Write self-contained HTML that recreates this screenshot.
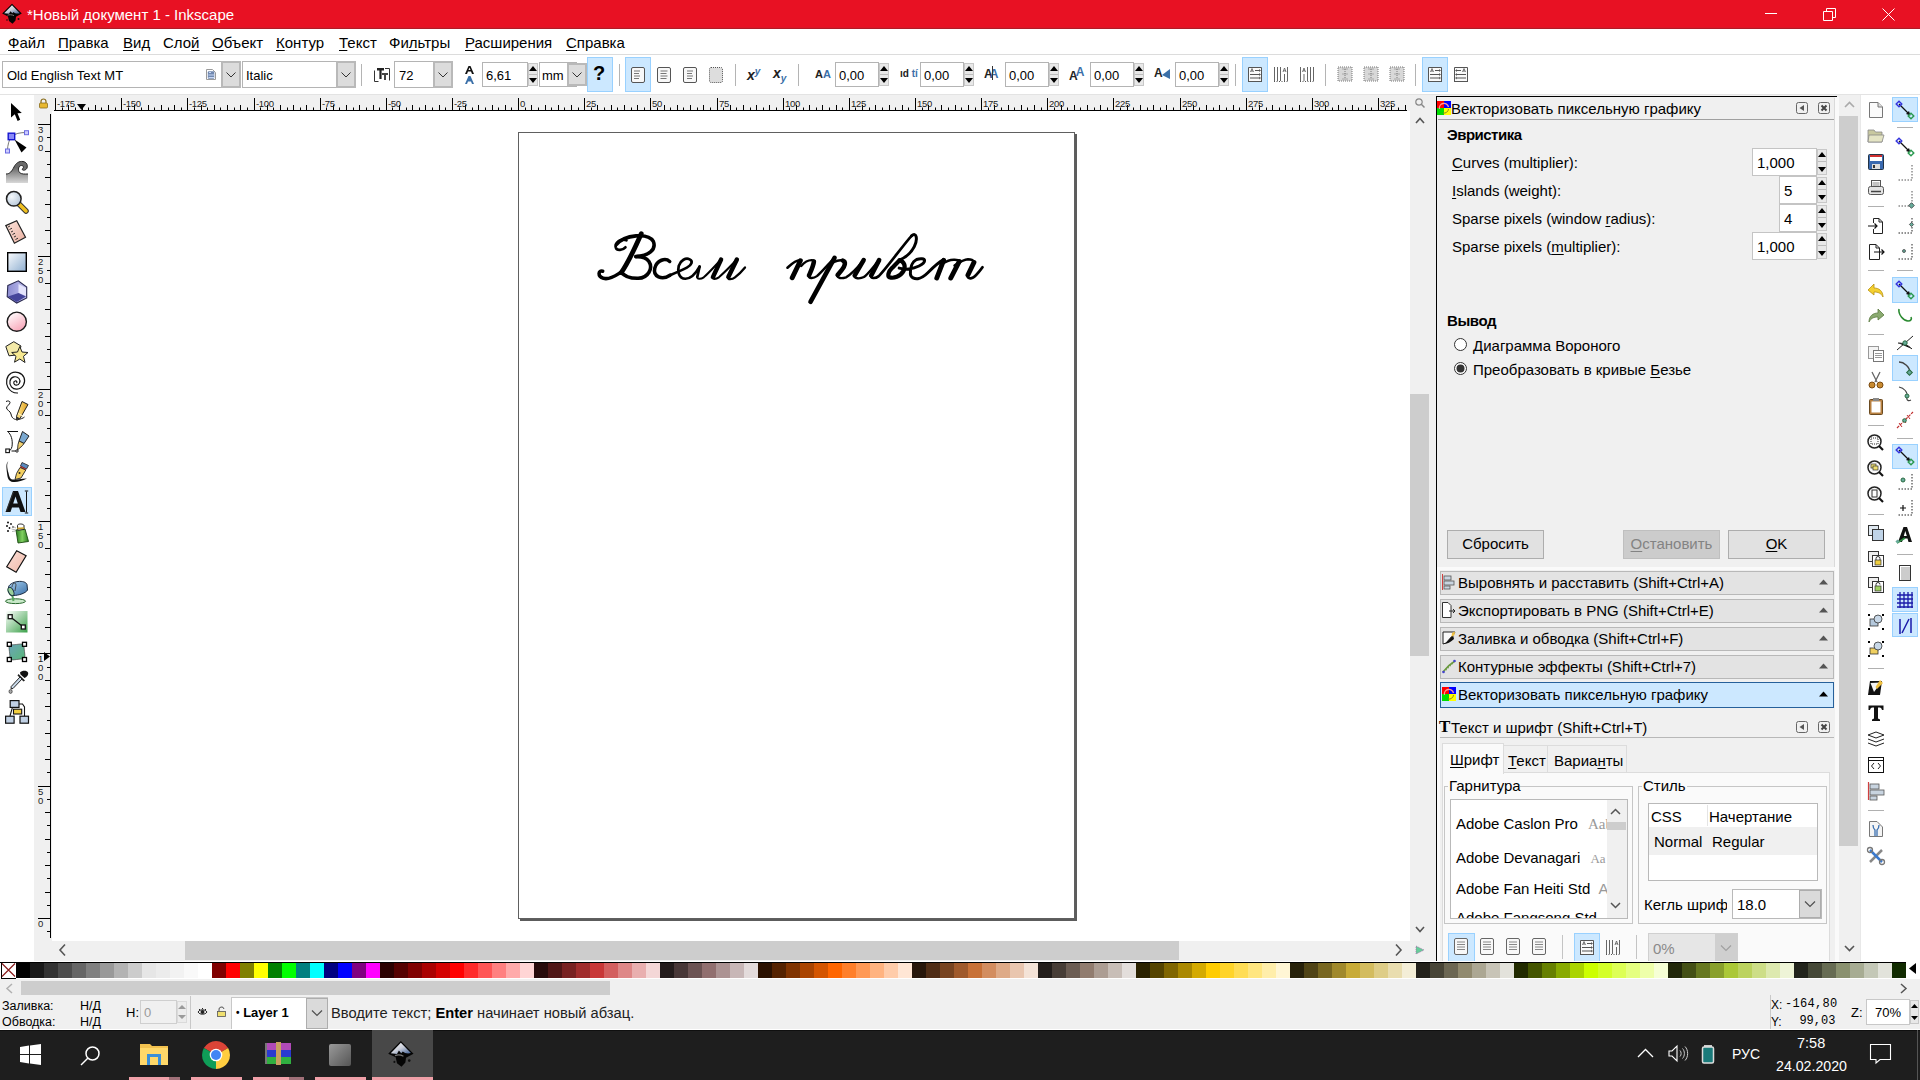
<!DOCTYPE html><html><head><meta charset='utf-8'><style>
*{margin:0;padding:0;box-sizing:border-box}
html,body{width:1920px;height:1080px;overflow:hidden;background:#fff;font-family:"Liberation Sans",sans-serif;color:#000}
.a{position:absolute}
.t{position:absolute;white-space:nowrap;line-height:1}
u{text-decoration:underline;text-underline-offset:2px;text-decoration-thickness:1px}
svg{position:absolute;overflow:visible}
</style></head><body><div class="a" style="left:0;top:0;width:1920px;height:27px;background:#e81123"></div><div class="a" style="left:0;top:27px;width:1920px;height:1px;background:#d81827"></div><div class="a" style="left:0;top:28px;width:1920px;height:1px;background:#b21a26"></div><div class="t" style="left:27px;top:7px;font-size:15px;color:#fff">*Новый документ 1 - Inkscape</div><svg style="left:0px;top:1px" width="24" height="24" viewBox="0 0 24 24"><defs><linearGradient id="lg1" x1="0" y1="0" x2="1" y2="1"><stop offset="0" stop-color="#ffffff"/><stop offset=".5" stop-color="#c8ccd8"/><stop offset="1" stop-color="#3a5a90"/></linearGradient></defs><path d="M12 2.8L21.8 12.6L16 15.8L15.5 19.5L12.5 22.8L9 20L8 15.5L2.2 12.6Z" fill="#050505"/><path d="M12 4.2L19.8 12.2C17.5 12.8 15 12.5 13.5 11L12.3 12.3L10.5 10.2L9 12.8L4.2 12.3Z" fill="url(#lg1)"/><path d="M7.5 14.2C9 13.5 12 13.6 14 14.6" stroke="#777" stroke-width="1" fill="none"/><circle cx="18.5" cy="18" r="1" fill="#111"/><circle cx="7" cy="19" r=".8" fill="#111"/></svg><div class="a" style="left:1765px;top:13px;width:12px;height:1px;background:#fff"></div><svg style="left:1823px;top:8px" width="13" height="13" viewBox="0 0 13 13"><path d="M0.5 3.5h9v9h-9z M3.5 3.5v-3h9v9h-3" fill="none" stroke="#fff" stroke-width="1"/></svg><svg style="left:1882px;top:8px" width="13" height="13" viewBox="0 0 13 13"><path d="M0.5 0.5L12.5 12.5M12.5 0.5L0.5 12.5" stroke="#fff" stroke-width="1"/></svg><div class="t" style="left:8px;top:35px;font-size:15px"><u>Ф</u>айл</div><div class="t" style="left:58px;top:35px;font-size:15px"><u>П</u>равка</div><div class="t" style="left:123px;top:35px;font-size:15px"><u>В</u>ид</div><div class="t" style="left:163px;top:35px;font-size:15px">Сло<u>й</u></div><div class="t" style="left:212px;top:35px;font-size:15px"><u>О</u>бъект</div><div class="t" style="left:276px;top:35px;font-size:15px"><u>К</u>онтур</div><div class="t" style="left:339px;top:35px;font-size:15px"><u>Т</u>екст</div><div class="t" style="left:389px;top:35px;font-size:15px">Фи<u>л</u>ьтры</div><div class="t" style="left:465px;top:35px;font-size:15px"><u>Р</u>асширения</div><div class="t" style="left:566px;top:35px;font-size:15px"><u>С</u>правка</div><div class="a" style="left:0;top:54px;width:1920px;height:1px;background:#dcdcdc"></div><div class="a" style="left:0;top:94px;width:1920px;height:1px;background:#e3e3e3"></div><div class="a" style="left:2px;top:61px;width:220px;height:27px;background:#fff;border:1px solid #b4b4b4"></div><div class="t" style="left:7px;top:69px;font-size:13px;color:#000">Old English Text MT</div><svg style="left:205px;top:68px" width="12" height="13" viewBox="0 0 12 13"><path d="M1.5 1.5H7.5L10.5 4.5V11.5H1.5Z" fill="#fff" stroke="#9a9a9a"/><rect x="2.8" y="3.2" width="6.5" height="7.5" rx="1" fill="#7088b0"/><path d="M4 4.5h2M3.5 7h5.5M3.5 9.5h5.5" stroke="#c8d8f4" stroke-width="1"/></svg><div class="a" style="left:221px;top:61px;width:20px;height:27px;background:#dcdcdc;border:2px solid #b9b9b9"></div><svg style="left:225.0px;top:70.5px" width="12" height="8" viewBox="0 0 12 8"><path d="M1.5 1.5L6 6L10.5 1.5" fill="none" stroke="#333" stroke-width="1"/></svg><div class="a" style="left:242px;top:61px;width:114px;height:27px;background:#fff;border:1px solid #b4b4b4"></div><div class="t" style="left:246px;top:69px;font-size:13px;color:#000">Italic</div><div class="a" style="left:336px;top:61px;width:20px;height:27px;background:#dcdcdc;border:2px solid #b9b9b9"></div><svg style="left:340.0px;top:70.5px" width="12" height="8" viewBox="0 0 12 8"><path d="M1.5 1.5L6 6L10.5 1.5" fill="none" stroke="#333" stroke-width="1"/></svg><div class="a" style="left:361px;top:64px;width:1px;height:22px;background:#b4b4b4"></div><svg style="left:374px;top:67px" width="16" height="15" viewBox="0 0 16 15"><path d="M0.5 14.5V3.5M0.5 14.5h4M15.5 1.5v12M11 1.5h4.5" stroke="#333" fill="none"/><path d="M3 1h7v2.5H7.6V12H5.4V3.5H3z" fill="#222"/><path d="M8 6h6v2h-2v5H10V8H8z" fill="#444"/></svg><div class="a" style="left:394px;top:61px;width:59px;height:27px;background:#fff;border:1px solid #b4b4b4"></div><div class="t" style="left:399px;top:69px;font-size:13px;color:#000">72</div><div class="a" style="left:433px;top:61px;width:20px;height:27px;background:#dcdcdc;border:2px solid #b9b9b9"></div><svg style="left:437.0px;top:70.5px" width="12" height="8" viewBox="0 0 12 8"><path d="M1.5 1.5L6 6L10.5 1.5" fill="none" stroke="#333" stroke-width="1"/></svg><svg style="left:464px;top:66px" width="12" height="18" viewBox="0 0 12 18"><path d="M1 8L4.5 0h2L10 8H8L7 5.5H4L3 8z M4.5 4h2L5.5 1.5z" fill="#111"/><path d="M1 18L4.5 10h2L10 18H8L7 15.5H4L3 18z" fill="#3a6fa8"/></svg><div class="a" style="left:482px;top:62px;width:46px;height:25px;background:#fff;border:1px solid #b4b4b4"></div><div class="t" style="left:486px;top:69px;font-size:13px;color:#000">6,61</div><div class="a" style="left:528px;top:63px;width:10px;height:23px;background:#e8e8e8;border:1px solid #c8c8c8"></div><div class="a" style="left:529px;top:74px;width:8px;height:1px;background:#bdbdbd"></div><svg style="left:529.0px;top:66px" width="8" height="17" viewBox="0 0 8 17"><path d="M0 5L4 0L8 5Z M0 12L4 17L8 12Z" fill="#000"/></svg><div class="a" style="left:539px;top:62px;width:38px;height:25px;background:#fff;border:1px solid #b4b4b4"></div><div class="t" style="left:542px;top:69px;font-size:13px;color:#000">mm</div><div class="a" style="left:567px;top:63px;width:20px;height:23px;background:#dcdcdc;border:2px solid #b9b9b9"></div><svg style="left:571.0px;top:70.5px" width="12" height="8" viewBox="0 0 12 8"><path d="M1.5 1.5L6 6L10.5 1.5" fill="none" stroke="#333" stroke-width="1"/></svg><div class="a" style="left:587px;top:57px;width:26px;height:35px;background:#cce8ff;border:1px solid #99d1ff"></div><div class="t" style="left:593px;top:63px;font-size:20px;font-weight:bold">?</div><div class="a" style="left:619px;top:64px;width:1px;height:22px;background:#b4b4b4"></div><div class="a" style="left:625px;top:57px;width:26px;height:35px;background:#cce8ff;border:1px solid #99d1ff"></div><svg style="left:631px;top:67px" width="14" height="16" viewBox="0 0 14 16"><rect x="0.5" y="0.5" width="13" height="15" rx="1.5" fill="#f8f8f8" stroke="#555"/><path d="M3 4.0h6" stroke="#777"/><path d="M3 6.5h5" stroke="#777"/><path d="M3 9.0h6" stroke="#777"/><path d="M3 11.5h5" stroke="#777"/></svg><svg style="left:657px;top:67px" width="14" height="16" viewBox="0 0 14 16"><rect x="0.5" y="0.5" width="13" height="15" rx="1.5" fill="#f8f8f8" stroke="#555"/><path d="M3.5 4.0h7" stroke="#777"/><path d="M3.5 6.5h6" stroke="#777"/><path d="M3.5 9.0h7" stroke="#777"/><path d="M3.5 11.5h6" stroke="#777"/></svg><svg style="left:683px;top:67px" width="14" height="16" viewBox="0 0 14 16"><rect x="0.5" y="0.5" width="13" height="15" rx="1.5" fill="#f8f8f8" stroke="#555"/><path d="M4 4.0h6" stroke="#777"/><path d="M4 6.5h5" stroke="#777"/><path d="M4 9.0h6" stroke="#777"/><path d="M4 11.5h5" stroke="#777"/></svg><svg style="left:709px;top:67px" width="14" height="16" viewBox="0 0 14 16"><rect x="0.5" y="0.5" width="13" height="15" rx="1.5" fill="#ddd" stroke="#555" stroke-dasharray="1 1"/></svg><div class="a" style="left:735px;top:64px;width:1px;height:22px;background:#b4b4b4"></div><div class="t" style="left:747px;top:68px;font-size:14px;font-weight:bold;font-style:italic;color:#222">x<span style="font-size:10px;color:#3a6fa8;position:relative;top:-5px">y</span></div><div class="t" style="left:773px;top:66px;font-size:14px;font-weight:bold;font-style:italic;color:#222">x<span style="font-size:10px;color:#3a6fa8;position:relative;top:4px">y</span></div><div class="a" style="left:798px;top:64px;width:1px;height:22px;background:#b4b4b4"></div><div class="a" style="left:835px;top:62px;width:44px;height:25px;background:#fff;border:1px solid #b4b4b4"></div><div class="t" style="left:839px;top:69px;font-size:13px;color:#000">0,00</div><div class="a" style="left:879px;top:63px;width:10px;height:23px;background:#e8e8e8;border:1px solid #c8c8c8"></div><div class="a" style="left:880px;top:74px;width:8px;height:1px;background:#bdbdbd"></div><svg style="left:880.0px;top:66px" width="8" height="17" viewBox="0 0 8 17"><path d="M0 5L4 0L8 5Z M0 12L4 17L8 12Z" fill="#000"/></svg><div class="t" style="left:815px;top:69px;font-size:11px;font-weight:bold;color:#222">A<span style="color:#3a6fa8">A</span></div><div class="a" style="left:920px;top:62px;width:44px;height:25px;background:#fff;border:1px solid #b4b4b4"></div><div class="t" style="left:924px;top:69px;font-size:13px;color:#000">0,00</div><div class="a" style="left:964px;top:63px;width:10px;height:23px;background:#e8e8e8;border:1px solid #c8c8c8"></div><div class="a" style="left:965px;top:74px;width:8px;height:1px;background:#bdbdbd"></div><svg style="left:965.0px;top:66px" width="8" height="17" viewBox="0 0 8 17"><path d="M0 5L4 0L8 5Z M0 12L4 17L8 12Z" fill="#000"/></svg><div class="t" style="left:900px;top:69px;font-size:10px;font-weight:bold;color:#222">ıd <span style="color:#3a6fa8">tí</span></div><div class="a" style="left:1005px;top:62px;width:44px;height:25px;background:#fff;border:1px solid #b4b4b4"></div><div class="t" style="left:1009px;top:69px;font-size:13px;color:#000">0,00</div><div class="a" style="left:1049px;top:63px;width:10px;height:23px;background:#e8e8e8;border:1px solid #c8c8c8"></div><div class="a" style="left:1050px;top:74px;width:8px;height:1px;background:#bdbdbd"></div><svg style="left:1050.0px;top:66px" width="8" height="17" viewBox="0 0 8 17"><path d="M0 5L4 0L8 5Z M0 12L4 17L8 12Z" fill="#000"/></svg><div class="t" style="left:984px;top:68px;font-size:12px;font-weight:bold;color:#222">A<span style="color:#3a6fa8;margin-left:-3px">A</span></div><div class="a" style="left:992px;top:66px;width:1px;height:14px;background:#333"></div><div class="a" style="left:1090px;top:62px;width:44px;height:25px;background:#fff;border:1px solid #b4b4b4"></div><div class="t" style="left:1094px;top:69px;font-size:13px;color:#000">0,00</div><div class="a" style="left:1134px;top:63px;width:10px;height:23px;background:#e8e8e8;border:1px solid #c8c8c8"></div><div class="a" style="left:1135px;top:74px;width:8px;height:1px;background:#bdbdbd"></div><svg style="left:1135.0px;top:66px" width="8" height="17" viewBox="0 0 8 17"><path d="M0 5L4 0L8 5Z M0 12L4 17L8 12Z" fill="#000"/></svg><div class="t" style="left:1069px;top:70px;font-size:12px;font-weight:bold;color:#222">A<span style="color:#3a6fa8;position:relative;top:-4px;margin-left:-2px">A</span></div><div class="a" style="left:1175px;top:62px;width:44px;height:25px;background:#fff;border:1px solid #b4b4b4"></div><div class="t" style="left:1179px;top:69px;font-size:13px;color:#000">0,00</div><div class="a" style="left:1219px;top:63px;width:10px;height:23px;background:#e8e8e8;border:1px solid #c8c8c8"></div><div class="a" style="left:1220px;top:74px;width:8px;height:1px;background:#bdbdbd"></div><svg style="left:1220.0px;top:66px" width="8" height="17" viewBox="0 0 8 17"><path d="M0 5L4 0L8 5Z M0 12L4 17L8 12Z" fill="#000"/></svg><div class="t" style="left:1154px;top:67px;font-size:12px;font-weight:bold;color:#222">A</div><svg style="left:1162px;top:69px" width="8" height="10" viewBox="0 0 8 10"><path d="M8 0L0 6L8 10Z" fill="#3a6fa8"/></svg><div class="a" style="left:1235px;top:64px;width:1px;height:22px;background:#b4b4b4"></div><div class="a" style="left:1242px;top:57px;width:26px;height:35px;background:#cce8ff;border:1px solid #99d1ff"></div><svg style="left:1247px;top:66px" width="16" height="16" viewBox="0 0 16 16"><path d="M1.5 15.5V1.5H14.5V15.5" fill="#fafafa" stroke="#555"/><path d="M1 15.5H15" stroke="#555"/><path d="M3.5 6L5 2.5L6.5 6M4 5h2" stroke="#555" stroke-width=".8" fill="none"/><path d="M8 4.5H13M3 8.5H13M3 12H13" stroke="#555"/><path d="M12 3.5L13.5 4.5L12 5.5M12 7.5L13.5 8.5L12 9.5M12 11L13.5 12L12 13" stroke="#555" stroke-width=".8" fill="none"/></svg><svg style="left:1273px;top:66px" width="16" height="16" viewBox="0 0 16 16"><path d="M1.5 1V15M4.5 1V15M7.5 1V15" stroke="#666"/><path d="M10 6L11.5 2L13 6M10.5 4.8h2" stroke="#555" stroke-width=".8" fill="none"/><path d="M11.5 8V15M14.5 1V15" stroke="#666"/><path d="M1 15.5H15" stroke="#555" stroke-dasharray="1 1.5"/></svg><svg style="left:1299px;top:66px" width="16" height="16" viewBox="0 0 16 16"><path d="M1.5 1V15" stroke="#666"/><path d="M3.5 6L5 2L6.5 6M4 4.8h2" stroke="#555" stroke-width=".8" fill="none"/><path d="M5 8V15M8.5 1V15M11.5 1V15M14.5 1V15" stroke="#666"/><path d="M1 15.5H15" stroke="#555" stroke-dasharray="1 1.5"/></svg><div class="a" style="left:1325px;top:64px;width:1px;height:22px;background:#b4b4b4"></div><svg style="left:1337px;top:66px" width="16" height="16" viewBox="0 0 16 16"><rect x="1" y="1" width="14" height="14" fill="#d8d8d8" stroke="#777" stroke-dasharray="1 1"/><path d="M5.5 3H10.5M8 3V13M5.5 8H10.5M5.5 13H10.5" stroke="#666" stroke-width=".8" stroke-dasharray="1 1"/></svg><svg style="left:1363px;top:66px" width="16" height="16" viewBox="0 0 16 16"><rect x="1" y="1" width="14" height="14" fill="#d8d8d8" stroke="#777" stroke-dasharray="1 1"/><path d="M5.5 3H10.5M8 3V13M5.5 8H10.5M5.5 13H10.5" stroke="#666" stroke-width=".8" stroke-dasharray="1 1"/></svg><svg style="left:1389px;top:66px" width="16" height="16" viewBox="0 0 16 16"><rect x="1" y="1" width="14" height="14" fill="#d8d8d8" stroke="#777" stroke-dasharray="1 1"/><path d="M5.5 3H10.5M8 3V13M5.5 8H10.5M5.5 13H10.5" stroke="#666" stroke-width=".8" stroke-dasharray="1 1"/></svg><div class="a" style="left:1415px;top:64px;width:1px;height:22px;background:#b4b4b4"></div><div class="a" style="left:1422px;top:57px;width:26px;height:35px;background:#cce8ff;border:1px solid #99d1ff"></div><svg style="left:1427px;top:66px" width="16" height="16" viewBox="0 0 16 16"><path d="M1.5 15.5V1.5H14.5V15.5" fill="#fafafa" stroke="#555"/><path d="M1 15.5H15" stroke="#555"/><path d="M3.5 6L5 2.5L6.5 6M4 5h2" stroke="#555" stroke-width=".8" fill="none"/><path d="M8 4.5H13M3 8.5H13M3 12H13" stroke="#555"/><path d="M12 3.5L13.5 4.5L12 5.5M12 7.5L13.5 8.5L12 9.5M12 11L13.5 12L12 13" stroke="#555" stroke-width=".8" fill="none"/></svg><svg style="left:1453px;top:66px" width="16" height="16" viewBox="0 0 16 16"><path d="M1.5 15.5V1.5H14.5V15.5" fill="#fafafa" stroke="#555"/><path d="M1 15.5H15" stroke="#555"/><path d="M9.5 6L11 2.5L12.5 6M10 5h2" stroke="#555" stroke-width=".8" fill="none"/><path d="M3 4.5H8M3 8.5H13M3 12H13" stroke="#555"/><path d="M4 3.5L2.5 4.5L4 5.5M4 7.5L2.5 8.5L4 9.5M4 11L2.5 12L4 13" stroke="#555" stroke-width=".8" fill="none"/></svg><div class="a" style="left:34px;top:95px;width:18px;height:846px;background:#f0f0f0"></div><div class="a" style="left:34px;top:95px;width:1376px;height:16px;background:#f0f0f0"></div><div class="a" style="left:1410px;top:95px;width:26px;height:866px;background:#f0f0f0"></div><div class="a" style="left:34px;top:941px;width:1402px;height:20px;background:#f0f0f0"></div><div class="a" style="left:185px;top:941px;width:994px;height:19px;background:#cdcdcd"></div><div class="a" style="left:1410px;top:394px;width:19px;height:262px;background:#cdcdcd"></div><svg style="left:34px;top:95px" width="1376" height="16" viewBox="34 95 1376 16"><path d="M54 110.5H1407" stroke="#000" stroke-width="1"/><path d="M55.5 98V110 M62.5 107.5V110 M68.5 105V110 M75.5 107.5V110 M82.5 105V110 M88.5 107.5V110 M95.5 105V110 M101.5 107.5V110 M108.5 105V110 M115.5 107.5V110 M121.5 98V110 M128.5 107.5V110 M134.5 105V110 M141.5 107.5V110 M148.5 105V110 M154.5 107.5V110 M161.5 105V110 M168.5 107.5V110 M174.5 105V110 M181.5 107.5V110 M187.5 98V110 M194.5 107.5V110 M201.5 105V110 M207.5 107.5V110 M214.5 105V110 M220.5 107.5V110 M227.5 105V110 M234.5 107.5V110 M240.5 105V110 M247.5 107.5V110 M254.5 98V110 M260.5 107.5V110 M267.5 105V110 M273.5 107.5V110 M280.5 105V110 M287.5 107.5V110 M293.5 105V110 M300.5 107.5V110 M306.5 105V110 M313.5 107.5V110 M320.5 98V110 M326.5 107.5V110 M333.5 105V110 M339.5 107.5V110 M346.5 105V110 M353.5 107.5V110 M359.5 105V110 M366.5 107.5V110 M373.5 105V110 M379.5 107.5V110 M386.5 98V110 M392.5 107.5V110 M399.5 105V110 M406.5 107.5V110 M412.5 105V110 M419.5 107.5V110 M425.5 105V110 M432.5 107.5V110 M439.5 105V110 M445.5 107.5V110 M452.5 98V110 M459.5 107.5V110 M465.5 105V110 M472.5 107.5V110 M478.5 105V110 M485.5 107.5V110 M492.5 105V110 M498.5 107.5V110 M505.5 105V110 M511.5 107.5V110 M518.5 98V110 M525.5 107.5V110 M531.5 105V110 M538.5 107.5V110 M545.5 105V110 M551.5 107.5V110 M558.5 105V110 M564.5 107.5V110 M571.5 105V110 M578.5 107.5V110 M584.5 98V110 M591.5 107.5V110 M597.5 105V110 M604.5 107.5V110 M611.5 105V110 M617.5 107.5V110 M624.5 105V110 M631.5 107.5V110 M637.5 105V110 M644.5 107.5V110 M650.5 98V110 M657.5 107.5V110 M664.5 105V110 M670.5 107.5V110 M677.5 105V110 M683.5 107.5V110 M690.5 105V110 M697.5 107.5V110 M703.5 105V110 M710.5 107.5V110 M717.5 98V110 M723.5 107.5V110 M730.5 105V110 M736.5 107.5V110 M743.5 105V110 M750.5 107.5V110 M756.5 105V110 M763.5 107.5V110 M769.5 105V110 M776.5 107.5V110 M783.5 98V110 M789.5 107.5V110 M796.5 105V110 M803.5 107.5V110 M809.5 105V110 M816.5 107.5V110 M822.5 105V110 M829.5 107.5V110 M836.5 105V110 M842.5 107.5V110 M849.5 98V110 M855.5 107.5V110 M862.5 105V110 M869.5 107.5V110 M875.5 105V110 M882.5 107.5V110 M889.5 105V110 M895.5 107.5V110 M902.5 105V110 M908.5 107.5V110 M915.5 98V110 M922.5 107.5V110 M928.5 105V110 M935.5 107.5V110 M941.5 105V110 M948.5 107.5V110 M955.5 105V110 M961.5 107.5V110 M968.5 105V110 M975.5 107.5V110 M981.5 98V110 M988.5 107.5V110 M994.5 105V110 M1001.5 107.5V110 M1008.5 105V110 M1014.5 107.5V110 M1021.5 105V110 M1027.5 107.5V110 M1034.5 105V110 M1041.5 107.5V110 M1047.5 98V110 M1054.5 107.5V110 M1061.5 105V110 M1067.5 107.5V110 M1074.5 105V110 M1080.5 107.5V110 M1087.5 105V110 M1094.5 107.5V110 M1100.5 105V110 M1107.5 107.5V110 M1113.5 98V110 M1120.5 107.5V110 M1127.5 105V110 M1133.5 107.5V110 M1140.5 105V110 M1147.5 107.5V110 M1153.5 105V110 M1160.5 107.5V110 M1166.5 105V110 M1173.5 107.5V110 M1180.5 98V110 M1186.5 107.5V110 M1193.5 105V110 M1199.5 107.5V110 M1206.5 105V110 M1213.5 107.5V110 M1219.5 105V110 M1226.5 107.5V110 M1233.5 105V110 M1239.5 107.5V110 M1246.5 98V110 M1252.5 107.5V110 M1259.5 105V110 M1266.5 107.5V110 M1272.5 105V110 M1279.5 107.5V110 M1285.5 105V110 M1292.5 107.5V110 M1299.5 105V110 M1305.5 107.5V110 M1312.5 98V110 M1319.5 107.5V110 M1325.5 105V110 M1332.5 107.5V110 M1338.5 105V110 M1345.5 107.5V110 M1352.5 105V110 M1358.5 107.5V110 M1365.5 105V110 M1371.5 107.5V110 M1378.5 98V110 M1385.5 107.5V110 M1391.5 105V110 M1398.5 107.5V110 M1405.5 105V110" stroke="#000" stroke-width="1"/><text x="57" y="107" font-family="Liberation Sans" font-size="9.5" fill="#222" letter-spacing="-0.3">-175</text><text x="123" y="107" font-family="Liberation Sans" font-size="9.5" fill="#222" letter-spacing="-0.3">-150</text><text x="189" y="107" font-family="Liberation Sans" font-size="9.5" fill="#222" letter-spacing="-0.3">-125</text><text x="256" y="107" font-family="Liberation Sans" font-size="9.5" fill="#222" letter-spacing="-0.3">-100</text><text x="322" y="107" font-family="Liberation Sans" font-size="9.5" fill="#222" letter-spacing="-0.3">-75</text><text x="388" y="107" font-family="Liberation Sans" font-size="9.5" fill="#222" letter-spacing="-0.3">-50</text><text x="454" y="107" font-family="Liberation Sans" font-size="9.5" fill="#222" letter-spacing="-0.3">-25</text><text x="520" y="107" font-family="Liberation Sans" font-size="9.5" fill="#222" letter-spacing="-0.3">0</text><text x="586" y="107" font-family="Liberation Sans" font-size="9.5" fill="#222" letter-spacing="-0.3">25</text><text x="652" y="107" font-family="Liberation Sans" font-size="9.5" fill="#222" letter-spacing="-0.3">50</text><text x="719" y="107" font-family="Liberation Sans" font-size="9.5" fill="#222" letter-spacing="-0.3">75</text><text x="785" y="107" font-family="Liberation Sans" font-size="9.5" fill="#222" letter-spacing="-0.3">100</text><text x="851" y="107" font-family="Liberation Sans" font-size="9.5" fill="#222" letter-spacing="-0.3">125</text><text x="917" y="107" font-family="Liberation Sans" font-size="9.5" fill="#222" letter-spacing="-0.3">150</text><text x="983" y="107" font-family="Liberation Sans" font-size="9.5" fill="#222" letter-spacing="-0.3">175</text><text x="1049" y="107" font-family="Liberation Sans" font-size="9.5" fill="#222" letter-spacing="-0.3">200</text><text x="1115" y="107" font-family="Liberation Sans" font-size="9.5" fill="#222" letter-spacing="-0.3">225</text><text x="1182" y="107" font-family="Liberation Sans" font-size="9.5" fill="#222" letter-spacing="-0.3">250</text><text x="1248" y="107" font-family="Liberation Sans" font-size="9.5" fill="#222" letter-spacing="-0.3">275</text><text x="1314" y="107" font-family="Liberation Sans" font-size="9.5" fill="#222" letter-spacing="-0.3">300</text><text x="1380" y="107" font-family="Liberation Sans" font-size="9.5" fill="#222" letter-spacing="-0.3">325</text></svg><svg style="left:77px;top:104px" width="9" height="6" viewBox="0 0 9 6"><path d="M0 0H9L4.5 6Z" fill="#000"/></svg><svg style="left:34px;top:111px" width="18" height="830" viewBox="34 111 18 830"><path d="M50.5 114V938" stroke="#000" stroke-width="1"/><path d="M47 931.5H50 M38 918.5H50 M47 905.5H50 M45 892.5H50 M47 878.5H50 M45 865.5H50 M47 852.5H50 M45 839.5H50 M47 825.5H50 M45 812.5H50 M47 799.5H50 M38 786.5H50 M47 772.5H50 M45 759.5H50 M47 746.5H50 M45 733.5H50 M47 720.5H50 M45 706.5H50 M47 693.5H50 M45 680.5H50 M47 667.5H50 M38 653.5H50 M47 640.5H50 M45 627.5H50 M47 614.5H50 M45 600.5H50 M47 587.5H50 M45 574.5H50 M47 561.5H50 M45 548.5H50 M47 534.5H50 M38 521.5H50 M47 508.5H50 M45 495.5H50 M47 481.5H50 M45 468.5H50 M47 455.5H50 M45 442.5H50 M47 428.5H50 M45 415.5H50 M47 402.5H50 M38 389.5H50 M47 376.5H50 M45 362.5H50 M47 349.5H50 M45 336.5H50 M47 323.5H50 M45 309.5H50 M47 296.5H50 M45 283.5H50 M47 270.5H50 M38 256.5H50 M47 243.5H50 M45 230.5H50 M47 217.5H50 M45 204.5H50 M47 190.5H50 M45 177.5H50 M47 164.5H50 M45 151.5H50 M47 137.5H50 M38 124.5H50" stroke="#000" stroke-width="1"/><text x="38" y="926.5" font-family="Liberation Sans" font-size="9.5" fill="#222">0</text><text x="38" y="794.5" font-family="Liberation Sans" font-size="9.5" fill="#222">5</text><text x="38" y="803.5" font-family="Liberation Sans" font-size="9.5" fill="#222">0</text><text x="38" y="661.5" font-family="Liberation Sans" font-size="9.5" fill="#222">1</text><text x="38" y="670.5" font-family="Liberation Sans" font-size="9.5" fill="#222">0</text><text x="38" y="679.5" font-family="Liberation Sans" font-size="9.5" fill="#222">0</text><text x="38" y="529.5" font-family="Liberation Sans" font-size="9.5" fill="#222">1</text><text x="38" y="538.5" font-family="Liberation Sans" font-size="9.5" fill="#222">5</text><text x="38" y="547.5" font-family="Liberation Sans" font-size="9.5" fill="#222">0</text><text x="38" y="397.5" font-family="Liberation Sans" font-size="9.5" fill="#222">2</text><text x="38" y="406.5" font-family="Liberation Sans" font-size="9.5" fill="#222">0</text><text x="38" y="415.5" font-family="Liberation Sans" font-size="9.5" fill="#222">0</text><text x="38" y="264.5" font-family="Liberation Sans" font-size="9.5" fill="#222">2</text><text x="38" y="273.5" font-family="Liberation Sans" font-size="9.5" fill="#222">5</text><text x="38" y="282.5" font-family="Liberation Sans" font-size="9.5" fill="#222">0</text><text x="38" y="132.5" font-family="Liberation Sans" font-size="9.5" fill="#222">3</text><text x="38" y="141.5" font-family="Liberation Sans" font-size="9.5" fill="#222">0</text><text x="38" y="150.5" font-family="Liberation Sans" font-size="9.5" fill="#222">0</text></svg><svg style="left:44px;top:652px" width="6" height="9" viewBox="0 0 6 9"><path d="M0 0V9L6 4.5Z" fill="#000"/></svg><svg style="left:39px;top:99px" width="9" height="9" viewBox="0 0 9 9"><path d="M2 4V2.5a2.5 2.5 0 0 1 5 0V4" fill="none" stroke="#8a6d1a" stroke-width="1.2"/><rect x="0.5" y="4" width="8" height="5" rx="1" fill="#e8b830" stroke="#8a6d1a" stroke-width=".8"/></svg><svg style="left:1415px;top:98px" width="10" height="10" viewBox="0 0 10 10"><circle cx="4" cy="4" r="3.2" fill="none" stroke="#888" stroke-width="1.2"/><path d="M6.3 6.3L9.5 9.5" stroke="#888" stroke-width="1.5"/></svg><svg style="left:1415px;top:117px" width="10" height="7" viewBox="0 0 10 7"><path d="M1 6L5 1.5L9 6" fill="none" stroke="#555" stroke-width="1.6"/></svg><svg style="left:1415px;top:926px" width="10" height="7" viewBox="0 0 10 7"><path d="M1 1L5 5.5L9 1" fill="none" stroke="#555" stroke-width="1.6"/></svg><svg style="left:58px;top:943px" width="8" height="14" viewBox="0 0 8 14"><path d="M7 1.5L2 7L7 12.5" fill="none" stroke="#555" stroke-width="1.6"/></svg><svg style="left:1395px;top:943px" width="8" height="14" viewBox="0 0 8 14"><path d="M1 1.5L6 7L1 12.5" fill="none" stroke="#555" stroke-width="1.6"/></svg><svg style="left:1415px;top:945px" width="10" height="10" viewBox="0 0 10 10"><path d="M1 1L9 5L1 9Z" fill="#6c9"/><path d="M1 1L9 5L1 9Z" fill="none" stroke="#a6a" stroke-width=".8" stroke-dasharray="1 1"/></svg><div class="a" style="left:518px;top:132px;width:557px;height:787px;border:1px solid #606060;background:#fff"></div><div class="a" style="left:1075px;top:134px;width:2px;height:787px;background:#5c5c5c"></div><div class="a" style="left:520px;top:919px;width:557px;height:2px;background:#5c5c5c"></div><svg style="left:0;top:0" width="1920" height="1080" viewBox="0 0 1920 1080"><g fill="none" stroke="#000" stroke-linecap="round" stroke-linejoin="round">
<g transform="translate(590 220) scale(0.10417)" stroke-width="26">
<path d="M350,195 C300,175 235,215 248,265 C258,300 315,290 340,262"/>
<path d="M255,235 C330,140 560,120 608,205 C640,285 560,345 440,350" stroke-width="34"/>
<path d="M492,132 C440,250 360,420 300,505" stroke-width="46"/>
<path d="M122,492 C80,478 68,540 130,560 C200,578 262,520 300,500 C330,540 380,562 462,560 C562,556 606,462 566,398 C532,350 470,350 440,352" stroke-width="34"/>
<path d="M765,398 C725,362 642,382 622,462 C602,542 690,582 768,530" stroke-width="34"/>
<path d="M768,530 C810,512 880,482 930,457 C975,434 992,396 957,378 C920,360 870,385 852,440 C838,492 852,562 915,564 C970,565 1020,505 1052,448" stroke-width="26"/>
<path d="M1052,448 L1030,545" stroke-width="26"/>
<path d="M1030,545 C1025,568 1062,570 1092,550 C1140,510 1210,430 1258,380 M1180,548 C1172,570 1207,572 1237,550 C1292,505 1362,430 1410,380" stroke-width="20"/>
<path d="M1258,380 L1180,548 M1410,380 L1328,548" stroke-width="43"/>
<path d="M1328,548 C1318,574 1362,574 1392,550 C1432,520 1465,485 1488,456" stroke-width="22"/>
</g>
<g transform="translate(780 220) scale(0.11458)" stroke-width="23">
<path d="M65,417 C100,385 140,345 178,352" stroke-width="22"/>
<path d="M178,356 L106,505" stroke-width="42"/>
<path d="M185,402 C215,367 255,345 292,352" stroke-width="21"/>
<path d="M296,362 C292,400 268,450 253,484" stroke-width="40"/>
<path d="M253,484 C245,512 292,512 322,490 C365,455 425,380 476,330" stroke-width="21"/>
<path d="M476,330 L266,714" stroke-width="40"/>
<path d="M418,410 C455,370 500,345 545,352" stroke-width="21"/>
<path d="M548,354 C580,365 565,405 540,435 L503,480" stroke-width="40"/>
<path d="M503,480 C495,512 540,512 576,500 C622,478 682,410 730,350" stroke-width="21"/>
<path d="M730,350 L652,484 M865,350 L796,484" stroke-width="40"/>
<path d="M652,484 C640,514 700,515 732,498 C772,470 820,400 865,350" stroke-width="21"/>
<path d="M796,484 C786,514 835,512 862,490 C930,420 1090,200 1148,138" stroke-width="23"/>
<path d="M1148,138 C1190,100 1205,165 1172,232 C1142,290 1092,330 1042,350" stroke-width="26"/>
<path d="M1042,350 C1082,362 1100,402 1080,442 C1050,495 990,512 956,500 C936,490 945,452 975,422 C1000,396 1025,372 1042,352" stroke-width="37"/>
<path d="M1040,420 C1070,428 1100,432 1125,428 C1180,420 1260,390 1262,355 C1262,335 1222,335 1192,345 C1152,365 1135,420 1138,470 C1141,505 1175,515 1203,512 C1240,505 1270,480 1290,460 C1330,420 1380,370 1425,348" stroke-width="26"/>
<path d="M1403,390 C1440,365 1490,345 1523,347 C1548,348 1560,352 1565,360 M1523,398 C1570,365 1610,342 1640,342 C1665,343 1685,350 1692,362" stroke-width="21"/>
<path d="M1428,352 L1368,507 M1565,362 L1490,507 M1693,370 L1640,480" stroke-width="42"/>
<path d="M1640,480 C1630,510 1660,515 1685,502 C1720,480 1745,440 1768,412" stroke-width="23"/>
</g></g></svg><div class="a" style="left:2px;top:487px;width:30px;height:29px;background:#cce8ff;border:1px solid #99d1ff"></div><svg style="left:5px;top:100px" width="24" height="24" viewBox="0 0 24 24"><path d="M6 3L6 17.5L9.8 14.2L12.6 21L15.2 19.8L12.5 13.3L16.8 13Z" fill="#000"/></svg><svg style="left:5px;top:130px" width="24" height="24" viewBox="0 0 24 24"><path d="M6.5 6.5C10 3.5 15 2.5 21.5 2.5M6.5 6.5C4 10 2.5 15 2.5 21" fill="none" stroke="#666" stroke-width=".9"/><rect x="3.2" y="3.2" width="6.5" height="6.5" fill="#8a8af8" stroke="#1515d0" stroke-width="1.4"/><rect x="19.5" y="0.7" width="4" height="4" fill="#ccccff" stroke="#6a6ae0" stroke-width="1"/><rect x="0.5" y="19" width="4" height="4" fill="#ccccff" stroke="#6a6ae0" stroke-width="1"/><path d="M9.5 9.5L21.5 17.5L16.5 22.5Z" fill="#000"/></svg><svg style="left:5px;top:160px" width="24" height="24" viewBox="0 0 24 24"><defs><linearGradient id="tw" x1="0" y1="0" x2="0" y2="1"><stop offset="0.3" stop-color="#6a6a6a"/><stop offset="1" stop-color="#d8d8d8"/></linearGradient></defs><path d="M1 14C5 14 7 11 9 7C11 3 14 1 18 1.5C21.5 2 23 5 22 8C21 10.5 17.5 11 17 9C19 8.5 19 5.5 16.5 5.5C13.5 5.5 12.5 10 14.5 12.5C16.5 14.5 20 14 23 14V23H1Z" fill="url(#tw)"/><path d="M1 14C5 14 7 11 9 7C11 3 14 1 18 1.5C21.5 2 23 5 22 8C21 10.5 17.5 11 17 9C19 8.5 19 5.5 16.5 5.5C13.5 5.5 12.5 10 14.5 12.5C16.5 14.5 20 14 23 14" fill="none" stroke="#222" stroke-width="1"/></svg><svg style="left:5px;top:190px" width="24" height="24" viewBox="0 0 24 24"><defs><radialGradient id="zg" cx=".35" cy=".35" r=".7"><stop offset="0" stop-color="#f4f8fc"/><stop offset="1" stop-color="#b8c8d8"/></radialGradient></defs><path d="M14.5 14.5L21 21" stroke="#333" stroke-width="5.5" stroke-linecap="round"/><path d="M14.5 14.5L21 21" stroke="#f0c020" stroke-width="3.5" stroke-linecap="round"/><circle cx="8.8" cy="8.8" r="7.3" fill="url(#zg)" stroke="#222" stroke-width="1.5"/></svg><svg style="left:5px;top:220px" width="24" height="24" viewBox="0 0 24 24"><defs><linearGradient id="ms" x1="0" y1="0" x2="1" y2="1"><stop offset="0" stop-color="#fbe4dc"/><stop offset="1" stop-color="#eab0a0"/></linearGradient></defs><path d="M0.8 5.6L11.7 0.8L20.5 17.2L9.4 23.2Z" fill="url(#ms)" stroke="#222" stroke-width="1.2"/><path d="M3 7l2-1M4.5 9.5l2.5-1.3M6 12l2-1M7.5 14.5l2.5-1.3M9 17l2-1M10.5 19.5l2.5-1.3" stroke="#222" stroke-width=".9"/></svg><svg style="left:5px;top:250px" width="24" height="24" viewBox="0 0 24 24"><defs><linearGradient id="rc" x1="0" y1="0" x2="1" y2="1"><stop offset="0" stop-color="#fafcfe"/><stop offset="1" stop-color="#8eaed0"/></linearGradient></defs><rect x="2.7" y="2.7" width="18.6" height="18.6" fill="url(#rc)" stroke="#000" stroke-width="1.4"/></svg><svg style="left:5px;top:280px" width="24" height="24" viewBox="0 0 24 24"><defs><linearGradient id="bx" x1="0" y1="0" x2="1" y2="0"><stop offset="0" stop-color="#8c8cd0"/><stop offset="1" stop-color="#c0c0f0"/></linearGradient></defs><path d="M2.8 5.5L13.3 0.8L21.7 7V18L11.7 23L2.2 16.7Z" fill="url(#bx)" stroke="#2a2a50" stroke-width="1.1"/><path d="M13.5 4L21 8V16L13.5 13Z" fill="#e4e4fc"/><path d="M3 16.5L13.5 13L21 16.5L11.7 22Z" fill="#44449a"/></svg><svg style="left:5px;top:310px" width="24" height="24" viewBox="0 0 24 24"><defs><linearGradient id="el" x1="0.2" y1="0" x2="0.8" y2="1"><stop offset="0" stop-color="#fff"/><stop offset="1" stop-color="#f7a0b4"/></linearGradient></defs><circle cx="11.8" cy="11.7" r="9.6" fill="url(#el)" stroke="#1a1a1a" stroke-width="1.4"/></svg><svg style="left:5px;top:340px" width="24" height="24" viewBox="0 0 24 24"><path d="M0.8 6.5L8.8 1.7L16 6L13.5 14.8L4 15.8Z" fill="#f4eaa8" stroke="#222" stroke-width="1"/><path d="M14.8 6.5L17 12L23 12.5L18.5 16.3L20 22.5L14.8 19L9.5 22.2L11 16.3L6.7 12.5L12.5 12Z" fill="#f6e890" stroke="#222" stroke-width="1"/></svg><svg style="left:5px;top:370px" width="24" height="24" viewBox="0 0 24 24"><path d="M11.5 13C12.5 12 11.5 10.5 10 11C8 11.6 8.5 15 11 15.2C14.5 15.5 16 11 14 8.5C11.5 5.5 6 6.5 5 11C4 15.5 7.5 19.5 12 19.2C18 18.8 21 12.5 19 7.5C17 2.5 10.5 0.8 6 3.2C1.2 6 0.5 13 3 17.5C5 21 9 23.2 13 23" fill="none" stroke="#111" stroke-width="1.2"/></svg><svg style="left:5px;top:400px" width="24" height="24" viewBox="0 0 24 24"><defs><linearGradient id="pc" x1="0" y1="0" x2="1" y2="0"><stop offset="0" stop-color="#ffe890"/><stop offset="1" stop-color="#e0a020"/></linearGradient></defs><path d="M1 1.5C3 0.5 5 1 5 2.5C5 4.5 1.5 6 1.5 8C1.5 10 5.5 11 6 14C6.5 17 8 19.5 12 19.5C15 19.5 18.5 18 19.5 17" fill="none" stroke="#111" stroke-width="1"/><path d="M17 1.5L23 4.5L15 18.5L11.8 20.3L11.5 16.3Z" fill="url(#pc)" stroke="#222" stroke-width="1"/><path d="M11.5 16.3L15 18.5L11.8 20.3Z" fill="#333"/><path d="M13 13.5L18 16" stroke="#fff3c8" stroke-width="1.2"/></svg><svg style="left:5px;top:430px" width="24" height="24" viewBox="0 0 24 24"><path d="M2.5 1.5H13M2.5 1.5C6 4 8 10 7 16.5C6.8 18 6 19 5 20.5M6.5 21H12" fill="none" stroke="#111" stroke-width="1"/><rect x="0.8" y="19" width="3.6" height="3.6" fill="#fff" stroke="#111" stroke-width="1.1"/><circle cx="12" cy="21" r="1.2" fill="#fff" stroke="#111" stroke-width=".9"/><path d="M17.5 1.5L24 6L19 13.5L14 11Z" fill="#7aa8d0" stroke="#222" stroke-width="1"/><path d="M14 11L19 13.5L17.5 15.5L12.5 20L13 14.5Z" fill="#f0d070" stroke="#222" stroke-width=".9"/></svg><svg style="left:5px;top:460px" width="24" height="24" viewBox="0 0 24 24"><path d="M3.5 1.2C1.5 3 2 8 3.5 13C4.5 17 5 19.5 8 19.5C12 19.5 16 19 22 18.5C17 21 12 22.5 8 22C3.5 21.5 2.5 18 2 13C1.5 8 0.5 3 3.5 1.2Z" fill="#111"/><path d="M17 2.5L23.5 5.5L21.5 9L15.5 6Z" fill="#5a8ac0" stroke="#222" stroke-width=".8"/><path d="M15.5 6L21.5 9L20.8 10L15 7.5Z" fill="#c03030"/><path d="M15 7.5L20.8 10L16 18L10 19.5L11.5 13.5Z" fill="#f4d060" stroke="#222" stroke-width=".9"/><circle cx="14.5" cy="13" r="1" fill="#222"/></svg><svg style="left:5px;top:490px" width="24" height="24" viewBox="0 0 24 24"><path d="M0.5 22L8 1H13L20.5 22H15.5L14 17.5H7L5.5 22Z M8.2 13.5H12.8L10.5 6.5Z" fill="#111"/><path d="M1.5 21L8.5 2" stroke="#555" stroke-width=".5"/><path d="M21.5 1.5V22.5M19.8 1H23.2M19.8 23H23.2" stroke="#111" stroke-width="1"/></svg><svg style="left:5px;top:520px" width="24" height="24" viewBox="0 0 24 24"><g fill="#111"><circle cx="3" cy="2.5" r="1"/><circle cx="6" cy="4" r=".9"/><circle cx="2" cy="6" r="1"/><circle cx="4.5" cy="8" r=".9"/><circle cx="3" cy="11" r="1"/><circle cx="8" cy="7" r=".8"/></g><path d="M7 6L11 8M6.5 9L11 10M7 11.5L10.5 11" stroke="#888" stroke-width=".6"/><defs><linearGradient id="sp" x1="0" y1="0" x2="1" y2="0"><stop offset="0" stop-color="#2a7a20"/><stop offset=".5" stop-color="#80d060"/><stop offset="1" stop-color="#2a7a20"/></linearGradient></defs><path d="M11 10L20 9L23.5 21.5L13 23Z" fill="url(#sp)" stroke="#1a4a10" stroke-width=".9"/><path d="M12.5 5.5C12.5 3.5 18.5 3.5 19 5.5V9.5L12.8 10.2Z" fill="#fff" stroke="#222" stroke-width="1"/><path d="M12.3 8.5L19.2 8" stroke="#c8a020" stroke-width="1.5"/></svg><svg style="left:5px;top:550px" width="24" height="24" viewBox="0 0 24 24"><defs><linearGradient id="er" x1="0" y1="0" x2="1" y2="1"><stop offset="0" stop-color="#fbe0d8"/><stop offset="1" stop-color="#f0b8a8"/></linearGradient></defs><path d="M1.7 16.7L11.7 0.8L21.1 5.8L11.1 22.2Z" fill="url(#er)" stroke="#111" stroke-width="1.2"/></svg><svg style="left:5px;top:580px" width="24" height="24" viewBox="0 0 24 24"><ellipse cx="10.5" cy="21.2" rx="10" ry="2.4" fill="#c8e8c8" stroke="#2a6a30" stroke-width="1"/><path d="M3.5 8.5C2.5 11 5 14 7.5 16L8.5 21" stroke="#5aa860" stroke-width="2" fill="none"/><defs><linearGradient id="bk" x1="0" y1="0" x2="1" y2="1"><stop offset="0" stop-color="#a8d0f0"/><stop offset="1" stop-color="#3a70a8"/></linearGradient></defs><path d="M3.5 8C3 5 8 2 13 1.5C17.5 1 21 2 22 4.5L22.5 10C21 13 14 15.5 8 15.5Z" fill="url(#bk)" stroke="#1a2a40" stroke-width="1"/><ellipse cx="6" cy="11.5" rx="2.5" ry="4.5" transform="rotate(-25 6 11.5)" fill="#9ad09a" stroke="#1a2a40" stroke-width=".9"/><path d="M7 7C7 3 11 1.5 11 5L10 11" fill="none" stroke="#333" stroke-width=".8"/></svg><svg style="left:5px;top:610px" width="24" height="24" viewBox="0 0 24 24"><defs><linearGradient id="gr" x1="0" y1="0" x2="1" y2="1"><stop offset="0" stop-color="#fff"/><stop offset="1" stop-color="#3aa048"/></linearGradient></defs><rect x="1" y="1" width="21.5" height="21.5" fill="url(#gr)"/><path d="M5.2 6.8L18.3 17" stroke="#111" stroke-width="1.3"/><rect x="3.2" y="4.7" width="4" height="4" fill="#fff" stroke="#111" stroke-width="1.3"/><rect x="16.3" y="15" width="4" height="4" fill="#fff" stroke="#111" stroke-width="1.3"/></svg><svg style="left:5px;top:640px" width="24" height="24" viewBox="0 0 24 24"><defs><linearGradient id="mh" x1="0" y1="0" x2="1" y2="1"><stop offset="0" stop-color="#6aa4b8"/><stop offset="1" stop-color="#5ab878"/></linearGradient></defs><path d="M4.3 4.3C9 6 14 3 19.5 4.3C18 9 21 14 19.5 19.5C14 18 9 21 4.3 19.5C6 14 3 9 4.3 4.3Z" fill="url(#mh)" stroke="#333" stroke-width=".6"/><g fill="#fff" stroke="#000" stroke-width="1.3"><rect x="2.3" y="2.3" width="4" height="4"/><rect x="17.5" y="2.3" width="4" height="4"/><rect x="2.3" y="17.5" width="4" height="4"/><rect x="17.5" y="17.5" width="4" height="4"/></g></svg><svg style="left:5px;top:670px" width="24" height="24" viewBox="0 0 24 24"><path d="M15 2.5C17 0 22 0 23 2.5C24 5 21 7.5 19.5 8L15.5 4.5Z" fill="#111"/><path d="M13.5 4L20 10.5L18.5 11.5L12.5 5.5Z" fill="#222"/><path d="M15 7L17 9L8 18.5L6 18.8L6.2 16.5Z" fill="#c8d8e8" stroke="#111" stroke-width=".9"/><ellipse cx="5.6" cy="21.5" rx="1.6" ry="1.9" fill="#aaa" stroke="#333" stroke-width=".7"/></svg><svg style="left:5px;top:700px" width="24" height="24" viewBox="0 0 24 24"><path d="M14 4H17.5L19.5 7V16M7.5 7.2L5 16" fill="none" stroke="#111" stroke-width="1.1"/><g fill="#c0d0e4" stroke="#111" stroke-width="1.2"><rect x="5.2" y="0.6" width="8.8" height="6.8"/><rect x="0.6" y="16.2" width="8.5" height="7"/><rect x="15" y="16.2" width="8.5" height="7"/></g><rect x="8.5" y="9.2" width="8.2" height="4.8" fill="#f4d040" stroke="#111" stroke-width="1.1"/></svg><div class="a" style="left:1436px;top:95px;width:424px;height:866px;background:#f0f0f0"></div><div class="a" style="left:1436px;top:96px;width:401px;height:1px;background:#000"></div><div class="a" style="left:1436px;top:96px;width:1px;height:865px;background:#000"></div><div class="a" style="left:1839px;top:116px;width:19px;height:730px;background:#cdcdcd"></div><svg style="left:1844px;top:101px" width="11" height="7" viewBox="0 0 11 7"><path d="M1 6L5.5 1.5L10 6" fill="none" stroke="#aaa" stroke-width="1.6"/></svg><svg style="left:1844px;top:945px" width="11" height="7" viewBox="0 0 11 7"><path d="M1 1L5.5 5.5L10 1" fill="none" stroke="#555" stroke-width="1.6"/></svg><div class="a" style="left:1834px;top:98px;width:1px;height:469px;background:#dadada"></div><svg style="left:1437px;top:101px" width="14" height="14" viewBox="0 0 14 14"><rect x="0" y="0" width="7" height="7" fill="#f00"/><rect x="7" y="0" width="7" height="7" fill="#00f"/><rect x="0" y="7" width="7" height="7" fill="#0d0"/><rect x="7" y="7" width="7" height="7" fill="#ff0"/><path d="M2.5 8A4.5 4.5 0 0 1 11.5 6" fill="none" stroke="#ff9a9a" stroke-width="1.3"/><path d="M6 12A4.5 4.5 0 0 0 11.5 8" fill="none" stroke="#8a8a20" stroke-width="1"/></svg><div class="t" style="left:1451px;top:101px;font-size:15px;">Векторизовать пиксельную графику</div><svg style="left:1796px;top:102px" width="12" height="12" viewBox="0 0 12 12"><rect x=".5" y=".5" width="11" height="11" rx="2" fill="#f0f0f0" stroke="#666"/><path d="M8 3V9L3.5 6Z" fill="#555"/></svg><svg style="left:1818px;top:102px" width="12" height="12" viewBox="0 0 12 12"><rect x=".5" y=".5" width="11" height="11" rx="2" fill="#f0f0f0" stroke="#666"/><path d="M3.5 3.5L8.5 8.5M8.5 3.5L3.5 8.5" stroke="#444" stroke-width="2"/></svg><div class="a" style="left:1438px;top:119px;width:396px;height:1px;background:#a0a0a0"></div><div class="t" style="left:1447px;top:127px;font-size:15px;font-weight:bold;letter-spacing:-0.5px">Эвристика</div><div class="t" style="left:1452px;top:155px;font-size:15px;"><u>C</u>urves (multiplier):</div><div class="a" style="left:1752px;top:148px;width:65px;height:28px;background:#fff;border:1px solid #c4c4c4"></div><div class="t" style="left:1757px;top:155px;font-size:15px;">1,000</div><div class="a" style="left:1817px;top:149px;width:10px;height:26px;background:#e8e8e8;border:1px solid #c8c8c8"></div><div class="a" style="left:1818px;top:161px;width:8px;height:1px;background:#bcbcbc"></div><svg style="left:1818px;top:152px" width="8" height="20" viewBox="0 0 8 20"><path d="M0 5L4 0L8 5Z M0 15L4 20L8 15Z" fill="#000"/></svg><div class="t" style="left:1452px;top:183px;font-size:15px;"><u>I</u>slands (weight):</div><div class="a" style="left:1779px;top:176px;width:38px;height:28px;background:#fff;border:1px solid #c4c4c4"></div><div class="t" style="left:1784px;top:183px;font-size:15px;">5</div><div class="a" style="left:1817px;top:177px;width:10px;height:26px;background:#e8e8e8;border:1px solid #c8c8c8"></div><div class="a" style="left:1818px;top:189px;width:8px;height:1px;background:#bcbcbc"></div><svg style="left:1818px;top:180px" width="8" height="20" viewBox="0 0 8 20"><path d="M0 5L4 0L8 5Z M0 15L4 20L8 15Z" fill="#000"/></svg><div class="t" style="left:1452px;top:211px;font-size:15px;">Sparse pixels (window <u>r</u>adius):</div><div class="a" style="left:1779px;top:204px;width:38px;height:28px;background:#fff;border:1px solid #c4c4c4"></div><div class="t" style="left:1784px;top:211px;font-size:15px;">4</div><div class="a" style="left:1817px;top:205px;width:10px;height:26px;background:#e8e8e8;border:1px solid #c8c8c8"></div><div class="a" style="left:1818px;top:217px;width:8px;height:1px;background:#bcbcbc"></div><svg style="left:1818px;top:208px" width="8" height="20" viewBox="0 0 8 20"><path d="M0 5L4 0L8 5Z M0 15L4 20L8 15Z" fill="#000"/></svg><div class="t" style="left:1452px;top:239px;font-size:15px;">Sparse pixels (<u>m</u>ultiplier):</div><div class="a" style="left:1752px;top:232px;width:65px;height:28px;background:#fff;border:1px solid #c4c4c4"></div><div class="t" style="left:1757px;top:239px;font-size:15px;">1,000</div><div class="a" style="left:1817px;top:233px;width:10px;height:26px;background:#e8e8e8;border:1px solid #c8c8c8"></div><div class="a" style="left:1818px;top:245px;width:8px;height:1px;background:#bcbcbc"></div><svg style="left:1818px;top:236px" width="8" height="20" viewBox="0 0 8 20"><path d="M0 5L4 0L8 5Z M0 15L4 20L8 15Z" fill="#000"/></svg><div class="t" style="left:1447px;top:313px;font-size:15px;font-weight:bold;letter-spacing:-0.4px">Вывод</div><svg style="left:1453px;top:337px" width="15" height="15" viewBox="0 0 15 15"><circle cx="7.5" cy="7.5" r="6" fill="#fff" stroke="#333" stroke-width="1"/></svg><div class="t" style="left:1473px;top:338px;font-size:15px;"><u>Д</u>иаграмма Вороного</div><svg style="left:1453px;top:361px" width="15" height="15" viewBox="0 0 15 15"><circle cx="7.5" cy="7.5" r="6" fill="#fff" stroke="#333" stroke-width="1"/><circle cx="7.5" cy="7.5" r="4" fill="#333"/></svg><div class="t" style="left:1473px;top:362px;font-size:15px;">Преобразовать в кривые <u>Б</u>езье</div><div class="a" style="left:1447px;top:530px;width:97px;height:29px;background:#e1e1e1;border:1px solid #adadad"></div><div class="t" style="left:1447px;top:536px;width:97px;text-align:center;font-size:15px;color:#000">Сбросить</div><div class="a" style="left:1623px;top:530px;width:97px;height:29px;background:#cccccc;border:1px solid #bfbfbf"></div><div class="t" style="left:1623px;top:536px;width:97px;text-align:center;font-size:15px;color:#838383"><u>О</u>становить</div><div class="a" style="left:1728px;top:530px;width:97px;height:29px;background:#e1e1e1;border:1px solid #adadad"></div><div class="t" style="left:1728px;top:536px;width:97px;text-align:center;font-size:15px;color:#000"><u>O</u>K</div><div class="a" style="left:1437px;top:567px;width:3px;height:394px;background:#fafafa"></div><div class="a" style="left:1437px;top:567px;width:402px;height:3px;background:#fafafa"></div><div class="a" style="left:1835px;top:97px;width:4px;height:864px;background:#fafafa"></div><div class="a" style="left:1440px;top:571px;width:394px;height:24px;background:#e3e3e3;border:1px solid #b8b8b8"></div><div class="t" style="left:1458px;top:575px;font-size:15px;">Выровнять и расставить (Shift+Ctrl+A)</div><svg style="left:1819px;top:579px" width="9" height="6" viewBox="0 0 9 6"><path d="M0 5.5L4.5 0.5L9 5.5Z" fill="#555"/></svg><div class="a" style="left:1440px;top:599px;width:394px;height:24px;background:#e3e3e3;border:1px solid #b8b8b8"></div><div class="t" style="left:1458px;top:603px;font-size:15px;">Экспортировать в PNG (Shift+Ctrl+E)</div><svg style="left:1819px;top:607px" width="9" height="6" viewBox="0 0 9 6"><path d="M0 5.5L4.5 0.5L9 5.5Z" fill="#555"/></svg><div class="a" style="left:1440px;top:627px;width:394px;height:24px;background:#e3e3e3;border:1px solid #b8b8b8"></div><div class="t" style="left:1458px;top:631px;font-size:15px;">Заливка и обводка (Shift+Ctrl+F)</div><svg style="left:1819px;top:635px" width="9" height="6" viewBox="0 0 9 6"><path d="M0 5.5L4.5 0.5L9 5.5Z" fill="#555"/></svg><div class="a" style="left:1440px;top:655px;width:394px;height:24px;background:#e3e3e3;border:1px solid #b8b8b8"></div><div class="t" style="left:1458px;top:659px;font-size:15px;">Контурные эффекты (Shift+Ctrl+7)</div><svg style="left:1819px;top:663px" width="9" height="6" viewBox="0 0 9 6"><path d="M0 5.5L4.5 0.5L9 5.5Z" fill="#555"/></svg><div class="a" style="left:1440px;top:682px;width:394px;height:26px;background:#cce8ff;border:1px solid #26609a"></div><div class="t" style="left:1458px;top:687px;font-size:15px;">Векторизовать пиксельную графику</div><svg style="left:1819px;top:691px" width="9" height="6" viewBox="0 0 9 6"><path d="M0 5.5L4.5 0.5L9 5.5Z" fill="#000"/></svg><svg style="left:1441px;top:574px" width="14" height="16" viewBox="0 0 14 16"><path d="M1.5 0V16" stroke="#d04040"/><rect x="3" y="2" width="7" height="4" fill="#c8d4e0" stroke="#555" stroke-width=".8"/><rect x="3" y="7" width="10" height="4" fill="#c8d4e0" stroke="#555" stroke-width=".8"/><rect x="3" y="12" width="6" height="3" fill="#c8d4e0" stroke="#555" stroke-width=".8"/></svg><svg style="left:1442px;top:602px" width="14" height="16" viewBox="0 0 14 16"><path d="M.5 .5H6L9 3.5V15.5H.5Z" fill="#fff" stroke="#333"/><path d="M7 9H13M11 7L13 9L11 11" stroke="#222" fill="none"/></svg><svg style="left:1442px;top:630px" width="14" height="16" viewBox="0 0 14 16"><path d="M1 2H13L11 5L4 13L1 14Z" fill="#fafafa" stroke="#222" stroke-width="1"/><path d="M1 14L4 13L11 5L12 9C9 12 5 14 1 14Z" fill="#111"/><path d="M10 3L13 1.5L12.5 5L9.5 7Z" fill="#f0c040"/></svg><svg style="left:1442px;top:658px" width="14" height="16" viewBox="0 0 14 16"><path d="M1 14C4 10 8 6 13 3" stroke="#6a9a40" stroke-width="1.5" fill="none"/><path d="M3 11l2 1M5 9l2 1M7 7l2 1M9 5l2 1" stroke="#6a9a40"/><circle cx="1.5" cy="14" r="1.3" fill="#44c"/><circle cx="12.5" cy="3" r="1.3" fill="#44c"/></svg><svg style="left:1442px;top:687px" width="14" height="14" viewBox="0 0 14 14"><rect x="0" y="0" width="7" height="7" fill="#f00"/><rect x="7" y="0" width="7" height="7" fill="#00f"/><rect x="0" y="7" width="7" height="7" fill="#0d0"/><rect x="7" y="7" width="7" height="7" fill="#ff0"/><path d="M2.5 8A4.5 4.5 0 0 1 11.5 6" fill="none" stroke="#ff9a9a" stroke-width="1.3"/><path d="M6 12A4.5 4.5 0 0 0 11.5 8" fill="none" stroke="#8a8a20" stroke-width="1"/></svg><div class="t" style="left:1439px;top:718px;font-size:17px;font-weight:bold;font-family:'Liberation Serif',serif">T</div><div class="t" style="left:1451px;top:720px;font-size:15px;">Текст и шрифт (Shift+Ctrl+T)</div><svg style="left:1796px;top:721px" width="12" height="12" viewBox="0 0 12 12"><rect x=".5" y=".5" width="11" height="11" rx="2" fill="#f0f0f0" stroke="#666"/><path d="M8 3V9L3.5 6Z" fill="#555"/></svg><svg style="left:1818px;top:721px" width="12" height="12" viewBox="0 0 12 12"><rect x=".5" y=".5" width="11" height="11" rx="2" fill="#f0f0f0" stroke="#666"/><path d="M3.5 3.5L8.5 8.5M8.5 3.5L3.5 8.5" stroke="#444" stroke-width="2"/></svg><div class="a" style="left:1440px;top:737px;width:394px;height:1px;background:#b8b8b8"></div><div class="a" style="left:1442px;top:772px;width:388px;height:189px;background:#fafafa;border:1px solid #dcdcdc;border-bottom:none"></div><div class="a" style="left:1442px;top:743px;width:62px;height:31px;background:#fafafa;border:1px solid #dcdcdc;border-bottom:none"></div><div class="a" style="left:1503px;top:745px;width:45px;height:27px;background:#f0f0f0;border:1px solid #dcdcdc;border-bottom:none"></div><div class="a" style="left:1547px;top:745px;width:80px;height:27px;background:#f0f0f0;border:1px solid #dcdcdc;border-bottom:none"></div><div class="t" style="left:1450px;top:752px;font-size:15px;"><u>Ш</u>рифт</div><div class="t" style="left:1508px;top:753px;font-size:15px;"><u>Т</u>екст</div><div class="t" style="left:1554px;top:753px;font-size:15px;">Вариа<u>н</u>ты</div><div class="a" style="left:1444px;top:786px;width:189px;height:138px;border:1px solid #c6c6c6"></div><div class="a" style="left:1448px;top:780px;width:72px;height:14px;background:#fafafa"></div><div class="t" style="left:1449px;top:778px;font-size:15px;">Гарнитура</div><div class="a" style="left:1638px;top:786px;width:189px;height:138px;border:1px solid #c6c6c6"></div><div class="a" style="left:1642px;top:780px;width:45px;height:14px;background:#fafafa"></div><div class="t" style="left:1643px;top:778px;font-size:15px;">Стиль</div><div class="a" style="left:1450px;top:799px;width:178px;height:120px;background:#fff;border:1px solid #b9b9b9;overflow:hidden"><div class="t" style="left:5px;top:16px;font-size:15px">Adobe Caslon Pro <span style="font-family:'Liberation Serif',serif;color:#999;margin-left:6px">Aab</span></div><div class="t" style="left:5px;top:50px;font-size:15px">Adobe Devanagari <span style="font-family:'Liberation Serif',serif;color:#999;font-size:13px;margin-left:6px">Aa</span></div><div class="t" style="left:5px;top:81px;font-size:15px">Adobe Fan Heiti Std <span style="color:#999;margin-left:4px">A</span></div><div class="t" style="left:5px;top:110px;font-size:15px">Adobe Fangsong Std</div><div class="a" style="left:156px;top:0;width:21px;height:119px;background:#f0f0f0"></div><div class="a" style="left:156px;top:22px;width:19px;height:8px;background:#cdcdcd"></div></div><svg style="left:1610px;top:808px" width="11" height="7" viewBox="0 0 11 7"><path d="M1 6L5.5 1.5L10 6" fill="none" stroke="#555" stroke-width="1.5"/></svg><svg style="left:1610px;top:902px" width="11" height="7" viewBox="0 0 11 7"><path d="M1 1L5.5 5.5L10 1" fill="none" stroke="#555" stroke-width="1.5"/></svg><div class="a" style="left:1648px;top:803px;width:170px;height:78px;background:#fff;border:1px solid #b9b9b9"></div><div class="a" style="left:1649px;top:827px;width:168px;height:28px;background:#f0f0f0"></div><div class="a" style="left:1707px;top:805px;width:1px;height:21px;background:#e4e4e4"></div><div class="t" style="left:1651px;top:809px;font-size:15px;">CSS</div><div class="t" style="left:1709px;top:809px;font-size:15px;">Начертание</div><div class="t" style="left:1654px;top:834px;font-size:15px;">Normal</div><div class="t" style="left:1712px;top:834px;font-size:15px;">Regular</div><div class="a" style="left:1644px;top:895px;width:83px;height:20px;overflow:hidden"><div class="t" style="left:0;top:2px;font-size:15px">Кегль шрифта</div></div><div class="a" style="left:1732px;top:889px;width:90px;height:30px;background:#fff;border:1px solid #b9b9b9"></div><div class="t" style="left:1737px;top:897px;font-size:15px;">18.0</div><div class="a" style="left:1799px;top:890px;width:22px;height:28px;background:#dadada;border:1px solid #adadad"></div><svg style="left:1804px;top:900px" width="12" height="8" viewBox="0 0 12 8"><path d="M1 1.5L6 6.5L11 1.5" fill="none" stroke="#505050" stroke-width="1.2"/></svg><div class="a" style="left:1448px;top:933px;width:27px;height:28px;background:#cce8ff;border:1px solid #99d1ff;border-bottom:none"></div><div class="a" style="left:1574px;top:933px;width:26px;height:28px;background:#cce8ff;border:1px solid #99d1ff;border-bottom:none"></div><svg style="left:1454px;top:938px" width="14" height="17" viewBox="0 0 14 17"><rect x=".5" y=".5" width="13" height="16" rx="1.5" fill="#f8f8f8" stroke="#666"/><path d="M3 4.0h8" stroke="#888"/><path d="M3 6.5h8" stroke="#888"/><path d="M3 9.0h8" stroke="#888"/><path d="M3 11.5h8" stroke="#888"/></svg><svg style="left:1480px;top:938px" width="14" height="17" viewBox="0 0 14 17"><rect x=".5" y=".5" width="13" height="16" rx="1.5" fill="#f8f8f8" stroke="#666"/><path d="M3 4.0h8" stroke="#888"/><path d="M3 6.5h8" stroke="#888"/><path d="M3 9.0h8" stroke="#888"/><path d="M3 11.5h8" stroke="#888"/></svg><svg style="left:1506px;top:938px" width="14" height="17" viewBox="0 0 14 17"><rect x=".5" y=".5" width="13" height="16" rx="1.5" fill="#f8f8f8" stroke="#666"/><path d="M3 4.0h8" stroke="#888"/><path d="M3 6.5h8" stroke="#888"/><path d="M3 9.0h8" stroke="#888"/><path d="M3 11.5h8" stroke="#888"/></svg><svg style="left:1532px;top:938px" width="14" height="17" viewBox="0 0 14 17"><rect x=".5" y=".5" width="13" height="16" rx="1.5" fill="#f8f8f8" stroke="#666"/><path d="M3 4.0h8" stroke="#888"/><path d="M3 6.5h8" stroke="#888"/><path d="M3 9.0h8" stroke="#888"/><path d="M3 11.5h8" stroke="#888"/></svg><div class="a" style="left:1562px;top:935px;width:1px;height:24px;background:#c4c4c4"></div><svg style="left:1579px;top:939px" width="16" height="16" viewBox="0 0 16 16"><path d="M1.5 15.5V1.5H14.5V15.5" fill="#fafafa" stroke="#555"/><path d="M1 15.5H15" stroke="#555"/><path d="M3.5 6L5 2.5L6.5 6M4 5h2" stroke="#555" stroke-width=".8" fill="none"/><path d="M8 4.5H13M3 8.5H13M3 12H13" stroke="#555"/><path d="M12 3.5L13.5 4.5L12 5.5M12 7.5L13.5 8.5L12 9.5M12 11L13.5 12L12 13" stroke="#555" stroke-width=".8" fill="none"/></svg><svg style="left:1605px;top:939px" width="16" height="16" viewBox="0 0 16 16"><path d="M1.5 1V15M4.5 1V15M7.5 1V15" stroke="#666"/><path d="M10 6L11.5 2L13 6M10.5 4.8h2" stroke="#555" stroke-width=".8" fill="none"/><path d="M11.5 8V15M14.5 1V15" stroke="#666"/><path d="M1 15.5H15" stroke="#555" stroke-dasharray="1 1.5"/></svg><div class="a" style="left:1636px;top:935px;width:1px;height:24px;background:#c4c4c4"></div><div class="a" style="left:1648px;top:933px;width:90px;height:28px;background:#e6e6e6;border:1px solid #d0d0d0;border-bottom:none"></div><div class="t" style="left:1653px;top:941px;font-size:15px;color:#8a8a8a">0%</div><div class="a" style="left:1715px;top:934px;width:22px;height:27px;background:#cfcfcf"></div><svg style="left:1720px;top:944px" width="12" height="8" viewBox="0 0 12 8"><path d="M1 1.5L6 6.5L11 1.5" fill="none" stroke="#a0a0a0" stroke-width="1.2"/></svg><div class="a" style="left:1860px;top:95px;width:1px;height:866px;background:#e8e8e8"></div><svg style="left:1867px;top:101px" width="18" height="18" viewBox="0 0 18 18"><path d="M2.5 1.5H11L15.5 6V16.5H2.5Z" fill="#fafafa" stroke="#777"/><path d="M11 1.5V6H15.5" fill="#ddd" stroke="#777"/></svg><svg style="left:1867px;top:127px" width="18" height="18" viewBox="0 0 18 18"><path d="M1 3H7L8.5 5H15V15H1Z" fill="#c8c8a0" stroke="#888" stroke-width=".8"/><path d="M2 8H17L15 15H1Z" fill="#e4e4c4" stroke="#888" stroke-width=".8"/></svg><svg style="left:1867px;top:153px" width="18" height="18" viewBox="0 0 18 18"><rect x="1.5" y="1.5" width="15" height="15" rx="1" fill="#3a6ab0" stroke="#234"/><rect x="3" y="2" width="12" height="6" fill="#fff"/><rect x="3" y="2" width="12" height="2" fill="#d03030"/><rect x="5" y="11" width="8" height="5" fill="#ddd"/><rect x="6" y="12" width="2" height="3" fill="#333"/></svg><svg style="left:1867px;top:179px" width="18" height="18" viewBox="0 0 18 18"><rect x="4.5" y="1.5" width="9" height="6" fill="#fff" stroke="#555"/><path d="M5.5 4h7M5.5 6h7" stroke="#888"/><rect x="1.5" y="7.5" width="15" height="8" rx="2" fill="#e4e4e4" stroke="#555"/><path d="M4 12.5H14" stroke="#444" stroke-width="1.5"/></svg><div class="a" style="left:1868px;top:206px;width:16px;height:1px;background:#b0b0b0"></div><svg style="left:1867px;top:217px" width="18" height="18" viewBox="0 0 18 18"><path d="M6.5 1.5H12L15.5 5V16.5H6.5V12M6.5 6V1.5" fill="#fff" stroke="#222"/><path d="M12 1.5V5H15.5" fill="none" stroke="#222"/><path d="M1 9H10M7.5 6.5L10 9L7.5 11.5" fill="none" stroke="#111" stroke-width="1.2"/></svg><svg style="left:1867px;top:243px" width="18" height="18" viewBox="0 0 18 18"><path d="M2.5 1.5H9L12.5 5V16.5H2.5Z" fill="#fff" stroke="#222"/><path d="M9 1.5V5H12.5" fill="none" stroke="#222"/><path d="M7 9H17M14.5 6.5L17 9L14.5 11.5" fill="none" stroke="#111" stroke-width="1.2"/></svg><div class="a" style="left:1868px;top:270px;width:16px;height:1px;background:#b0b0b0"></div><svg style="left:1867px;top:282px" width="18" height="18" viewBox="0 0 18 18"><path d="M7 2L1 8L7 13V10C11 10 14 11 16 15C16 9 12 6 7 6Z" fill="#f4d030" stroke="#b89010" stroke-width=".8"/></svg><svg style="left:1867px;top:307px" width="18" height="18" viewBox="0 0 18 18"><path d="M11 2L17 8L11 13V10C7 10 4 11 2 15C2 9 6 6 11 6Z" fill="#8aaa70" stroke="#5a7a40" stroke-width=".8"/></svg><div class="a" style="left:1868px;top:334px;width:16px;height:1px;background:#b0b0b0"></div><svg style="left:1867px;top:345px" width="18" height="18" viewBox="0 0 18 18"><rect x="1.5" y="1.5" width="10" height="12" fill="#f4f4f4" stroke="#999"/><rect x="6.5" y="5.5" width="10" height="11" fill="#fff" stroke="#777"/><path d="M8 8.5h7M8 10.5h7M8 12.5h7" stroke="#999"/></svg><svg style="left:1867px;top:371px" width="18" height="18" viewBox="0 0 18 18"><path d="M5 1L10 11M13 1L8 11" stroke="#666" stroke-width="1.3"/><circle cx="5" cy="14" r="3" fill="#c88a30" stroke="#7a4a10"/><circle cx="13" cy="14" r="3" fill="#c88a30" stroke="#7a4a10"/></svg><svg style="left:1867px;top:397px" width="18" height="18" viewBox="0 0 18 18"><rect x="2.5" y="2.5" width="13" height="15" rx="1" fill="#b88040" stroke="#6a4a20"/><rect x="4.5" y="4.5" width="9" height="11" fill="#fff"/><rect x="6" y="1" width="6" height="3" fill="#888"/></svg><div class="a" style="left:1868px;top:425px;width:16px;height:1px;background:#b0b0b0"></div><svg style="left:1867px;top:434px" width="18" height="18" viewBox="0 0 18 18"><circle cx="7.5" cy="7.5" r="6.5" fill="#fafafa" stroke="#222" stroke-width="1.5"/><rect x="4" y="4" width="7" height="6" fill="none" stroke="#333" stroke-dasharray="1 1"/><path d="M12 12L16 16" stroke="#111" stroke-width="2.2"/></svg><svg style="left:1867px;top:460px" width="18" height="18" viewBox="0 0 18 18"><circle cx="7.5" cy="7.5" r="6.5" fill="#fafafa" stroke="#222" stroke-width="1.5"/><rect x="4" y="4" width="5" height="4" fill="#f0e070" stroke="#333" stroke-width=".7"/><rect x="6" y="6" width="5" height="4" fill="#f0e070" stroke="#333" stroke-width=".7"/><path d="M12 12L16 16" stroke="#111" stroke-width="2.2"/></svg><svg style="left:1867px;top:486px" width="18" height="18" viewBox="0 0 18 18"><circle cx="7.5" cy="7.5" r="6.5" fill="#fafafa" stroke="#222" stroke-width="1.5"/><rect x="5" y="4" width="5" height="7" fill="#fff" stroke="#333"/><path d="M12 12L16 16" stroke="#111" stroke-width="2.2"/></svg><div class="a" style="left:1868px;top:514px;width:16px;height:1px;background:#b0b0b0"></div><svg style="left:1867px;top:524px" width="18" height="18" viewBox="0 0 18 18"><rect x="1.5" y="1.5" width="10" height="10" fill="#dfe8f0" stroke="#333"/><rect x="5.5" y="5.5" width="11" height="11" fill="#c0d4e8" stroke="#333"/></svg><svg style="left:1867px;top:550px" width="18" height="18" viewBox="0 0 18 18"><rect x="1.5" y="1.5" width="10" height="10" fill="#eee" stroke="#333"/><rect x="5.5" y="5.5" width="11" height="11" fill="#fff" stroke="#333"/><rect x="8" y="10" width="6" height="5" fill="#f0d040" stroke="#333" stroke-width=".7"/><path d="M9 10V8.5a2 2 0 0 1 4 0V10" fill="none" stroke="#333"/></svg><svg style="left:1867px;top:576px" width="18" height="18" viewBox="0 0 18 18"><rect x="1.5" y="1.5" width="10" height="10" fill="#eee" stroke="#333"/><rect x="5.5" y="5.5" width="11" height="11" fill="#fff" stroke="#333"/><rect x="8" y="10" width="6" height="5" fill="#a0d060" stroke="#333" stroke-width=".7"/><path d="M9 10V8.5a2 2 0 0 1 4 0" fill="none" stroke="#333"/></svg><div class="a" style="left:1868px;top:604px;width:16px;height:1px;background:#b0b0b0"></div><svg style="left:1867px;top:613px" width="18" height="18" viewBox="0 0 18 18"><rect x="3" y="6" width="8" height="7" fill="#b4c8dc" stroke="#333" stroke-width=".8"/><circle cx="11" cy="6" r="4" fill="#c8d8e8" stroke="#333" stroke-width=".8"/><g fill="#000"><rect x="1" y="1" width="2" height="2"/><rect x="15" y="1" width="2" height="2"/><rect x="1" y="15" width="2" height="2"/><rect x="15" y="15" width="2" height="2"/></g></svg><svg style="left:1867px;top:640px" width="18" height="18" viewBox="0 0 18 18"><rect x="3" y="8" width="8" height="6" fill="#f0d060" stroke="#333" stroke-width=".8"/><circle cx="11" cy="6" r="4" fill="#c8d8e8" stroke="#333" stroke-width=".8"/><g fill="#000"><rect x="1" y="1" width="2" height="2"/><rect x="15" y="1" width="2" height="2"/><rect x="1" y="15" width="2" height="2"/><rect x="15" y="15" width="2" height="2"/></g></svg><div class="a" style="left:1868px;top:668px;width:16px;height:1px;background:#b0b0b0"></div><svg style="left:1867px;top:678px" width="18" height="18" viewBox="0 0 18 18"><path d="M1 17L3 3H15L13 17Z" fill="#111"/><path d="M3.5 5L14 4.5L7 14Z" fill="#f4f4f4"/><path d="M13 2L16 5L10 11L8.5 9Z" fill="#f0c040"/></svg><svg style="left:1867px;top:704px" width="18" height="18" viewBox="0 0 18 18"><path d="M1.5 1.5H16.5V6H15C14.5 3.5 13 3.5 11 3.5V14.5L13 15.5V17H5V15.5L7 14.5V3.5C5 3.5 3.5 3.5 3 6H1.5Z" fill="#111"/></svg><svg style="left:1867px;top:730px" width="18" height="18" viewBox="0 0 18 18"><path d="M1 5L9 2L17 5L9 8Z" fill="#fff" stroke="#222"/><path d="M1 9L9 12L17 9M1 13L9 16L17 13" fill="none" stroke="#222"/></svg><svg style="left:1867px;top:756px" width="18" height="18" viewBox="0 0 18 18"><rect x="1.5" y="1.5" width="15" height="15" fill="#fff" stroke="#111"/><path d="M1.5 4.5H16.5" stroke="#111"/><path d="M7 7L4.5 10L7 13M11 7L13.5 10L11 13" fill="none" stroke="#222"/></svg><svg style="left:1867px;top:782px" width="18" height="18" viewBox="0 0 18 18"><path d="M1.5 0V18" stroke="#d04040" stroke-width="1.2"/><rect x="3" y="2" width="9" height="5" fill="#c8d4e0" stroke="#555" stroke-width=".8"/><rect x="3" y="8" width="14" height="5" fill="#c8d4e0" stroke="#555" stroke-width=".8"/><rect x="3" y="14" width="7" height="4" fill="#c8d4e0" stroke="#555" stroke-width=".8"/></svg><div class="a" style="left:1868px;top:810px;width:16px;height:1px;background:#b0b0b0"></div><svg style="left:1867px;top:820px" width="18" height="18" viewBox="0 0 18 18"><path d="M2.5 1.5H10L15.5 7V16.5H2.5Z" fill="#f4f4f4" stroke="#777"/><path d="M6 5C6 8 7 9 8 10V16M12 5C12 8 11 9 10 10V16" fill="none" stroke="#3a6fb0" stroke-width="1.3"/></svg><svg style="left:1867px;top:847px" width="18" height="18" viewBox="0 0 18 18"><path d="M3 15L15 3" stroke="#888" stroke-width="2.5"/><path d="M3 3L15 15" stroke="#3a7ad0" stroke-width="2.5"/><circle cx="3" cy="3" r="2.5" fill="none" stroke="#777" stroke-width="1.3"/><circle cx="15" cy="15" r="2.5" fill="none" stroke="#777" stroke-width="1.3"/></svg><div class="a" style="left:1892px;top:97px;width:26px;height:25px;background:#cce8ff;border:1px solid #99d1ff"></div><svg style="left:1896px;top:101px" width="18" height="18" viewBox="0 0 18 18"><path d="M3 3L13 13" stroke="#111" stroke-width="1.3"/><path d="M14.5 14.5L10 13L13 10Z" fill="#111"/><rect x="1" y="1" width="4" height="4" transform="rotate(45 3 3)" fill="none" stroke="#3333dd" stroke-width="1.4"/><rect x="13" y="13" width="4" height="4" transform="rotate(45 15 15)" fill="none" stroke="#2a9a50" stroke-width="1.4"/></svg><div class="a" style="left:1897px;top:127px;width:16px;height:1px;background:#b0b0b0"></div><svg style="left:1896px;top:138px" width="18" height="18" viewBox="0 0 18 18"><path d="M3 3L13 13" stroke="#111" stroke-width="1.3"/><path d="M14.5 14.5L10 13L13 10Z" fill="#111"/><rect x="1" y="1" width="4" height="4" transform="rotate(45 3 3)" fill="none" stroke="#3333dd" stroke-width="1.4"/><rect x="13" y="13" width="4" height="4" transform="rotate(45 15 15)" fill="none" stroke="#2a9a50" stroke-width="1.4"/></svg><svg style="left:1896px;top:164px" width="18" height="18" viewBox="0 0 18 18"><path d="M16 1V16H1" fill="none" stroke="#555" stroke-dasharray="1.5 1.5"/></svg><svg style="left:1896px;top:190px" width="18" height="18" viewBox="0 0 18 18"><path d="M16 1V16H1" fill="none" stroke="#555" stroke-dasharray="1.5 1.5"/><rect x="13.5" y="13.5" width="4" height="4" transform="rotate(45 15.5 15.5)" fill="#6a9" stroke="#333" stroke-width=".7"/></svg><svg style="left:1896px;top:217px" width="18" height="18" viewBox="0 0 18 18"><path d="M16 1V16H1" fill="none" stroke="#222" stroke-dasharray="1.5 1.5"/><rect x="14" y="6" width="3" height="3" transform="rotate(45 15.5 7.5)" fill="#6a9" stroke="#333" stroke-width=".7"/></svg><svg style="left:1896px;top:243px" width="18" height="18" viewBox="0 0 18 18"><path d="M16 1V16H1" fill="none" stroke="#222" stroke-dasharray="1.5 1.5"/><circle cx="8" cy="8" r="1.5" fill="#6a9" stroke="#333" stroke-width=".7"/></svg><div class="a" style="left:1897px;top:270px;width:16px;height:1px;background:#b0b0b0"></div><div class="a" style="left:1892px;top:277px;width:26px;height:26px;background:#cce8ff;border:1px solid #99d1ff"></div><svg style="left:1896px;top:281px" width="18" height="18" viewBox="0 0 18 18"><path d="M3 3L13 13" stroke="#111" stroke-width="1.3"/><path d="M14.5 14.5L10 13L13 10Z" fill="#111"/><rect x="1" y="1" width="4" height="4" transform="rotate(45 3 3)" fill="none" stroke="#3333dd" stroke-width="1.4"/><rect x="13" y="13" width="4" height="4" transform="rotate(45 15 15)" fill="none" stroke="#2a9a50" stroke-width="1.4"/></svg><svg style="left:1896px;top:307px" width="18" height="18" viewBox="0 0 18 18"><path d="M3 2C2 8 8 14 12 14C15 14 16 12 15 10" fill="none" stroke="#2a8a30" stroke-width="1.6"/></svg><svg style="left:1896px;top:333px" width="18" height="18" viewBox="0 0 18 18"><path d="M1 17L17 3M2 10C7 10 12 12 16 16" stroke="#222" stroke-width="1"/><circle cx="9" cy="10" r="2.2" fill="#6a9" stroke="#2a6a40"/></svg><div class="a" style="left:1892px;top:355px;width:26px;height:26px;background:#cce8ff;border:1px solid #99d1ff"></div><svg style="left:1896px;top:359px" width="18" height="18" viewBox="0 0 18 18"><path d="M3 3C8 3 14 8 14 14" fill="none" stroke="#444" stroke-width="1.3"/><rect x="11.5" y="11.5" width="4" height="4" transform="rotate(45 13.5 13.5)" fill="#6a9" stroke="#2a6a40"/></svg><svg style="left:1896px;top:385px" width="18" height="18" viewBox="0 0 18 18"><path d="M3 2C8 3 12 7 11 12C10 16 13 16 15 15" fill="none" stroke="#444" stroke-width="1.1"/><circle cx="11" cy="11" r="2" fill="#6a9" stroke="#2a6a40"/></svg><svg style="left:1896px;top:411px" width="18" height="18" viewBox="0 0 18 18"><path d="M1 17L17 1" stroke="#c03030" stroke-width="1.2" stroke-dasharray="3 1"/><path d="M3 12L6 16M7 8L10 12M11 4L14 8" stroke="#c03030"/><circle cx="8.5" cy="9.5" r="1.8" fill="#6a9" stroke="#2a6a40"/></svg><div class="a" style="left:1897px;top:438px;width:16px;height:1px;background:#b0b0b0"></div><div class="a" style="left:1892px;top:444px;width:26px;height:25px;background:#cce8ff;border:1px solid #99d1ff"></div><svg style="left:1896px;top:447px" width="18" height="18" viewBox="0 0 18 18"><path d="M3 3L13 13" stroke="#111" stroke-width="1.3"/><path d="M14.5 14.5L10 13L13 10Z" fill="#111"/><rect x="1" y="1" width="4" height="4" transform="rotate(45 3 3)" fill="none" stroke="#3333dd" stroke-width="1.4"/><rect x="13" y="13" width="4" height="4" transform="rotate(45 15 15)" fill="none" stroke="#2a9a50" stroke-width="1.4"/></svg><svg style="left:1896px;top:473px" width="18" height="18" viewBox="0 0 18 18"><path d="M16 1V16H1" fill="none" stroke="#222" stroke-dasharray="1.5 1.5"/><circle cx="7" cy="7" r="2" fill="#6a9" stroke="#2a6a40"/></svg><svg style="left:1896px;top:499px" width="18" height="18" viewBox="0 0 18 18"><path d="M16 1V16H1" fill="none" stroke="#222" stroke-dasharray="1.5 1.5"/><path d="M4 9H10M7 6V12" stroke="#111" stroke-width="1.2"/></svg><svg style="left:1896px;top:526px" width="18" height="18" viewBox="0 0 18 18"><path d="M2 16L7.5 1H11L16 16H12.5L11.5 12.5H7L6 16Z M7.8 10H10.8L9.3 5Z" fill="#111"/><path d="M1 17L9 12" stroke="#2a8a40" stroke-width="1.5"/><rect x="0" y="14" width="3" height="3" transform="rotate(45 1.5 15.5)" fill="#6a9"/></svg><div class="a" style="left:1897px;top:554px;width:16px;height:1px;background:#b0b0b0"></div><svg style="left:1896px;top:564px" width="18" height="18" viewBox="0 0 18 18"><rect x="3.5" y="1.5" width="11" height="15" fill="#fff" stroke="#333"/><rect x="5" y="3" width="9" height="13" fill="#ccc"/></svg><div class="a" style="left:1892px;top:587px;width:26px;height:25px;background:#cce8ff;border:1px solid #99d1ff"></div><svg style="left:1896px;top:591px" width="18" height="18" viewBox="0 0 18 18"><path d="M4 1V17M8 1V17M12 1V17M16 1V17M1 4H17M1 8H17M1 12H17M1 16H17" stroke="#1a1aaa" stroke-width="1.3"/></svg><div class="a" style="left:1892px;top:613px;width:26px;height:24px;background:#cce8ff;border:1px solid #99d1ff"></div><svg style="left:1896px;top:617px" width="18" height="18" viewBox="0 0 18 18"><path d="M4 2V17M15 1V16M6 16L13 2" stroke="#1a1aaa" stroke-width="1.5"/></svg><div class="a" style="left:0;top:961px;width:1920px;height:1px;background:#fff"></div><div class="a" style="left:0;top:962px;width:1906px;height:1px;background:#000"></div><svg style="left:0;top:963px" width="1906" height="15" viewBox="0 0 1906 15" shape-rendering="crispEdges"><rect x="16" y="0" width="14" height="15" fill="#000000"/><rect x="30" y="0" width="14" height="15" fill="#1a1a1a"/><rect x="44" y="0" width="14" height="15" fill="#333333"/><rect x="58" y="0" width="14" height="15" fill="#4d4d4d"/><rect x="72" y="0" width="14" height="15" fill="#666666"/><rect x="86" y="0" width="14" height="15" fill="#808080"/><rect x="100" y="0" width="14" height="15" fill="#999999"/><rect x="114" y="0" width="14" height="15" fill="#b3b3b3"/><rect x="128" y="0" width="14" height="15" fill="#cccccc"/><rect x="142" y="0" width="14" height="15" fill="#e6e6e6"/><rect x="156" y="0" width="14" height="15" fill="#ececec"/><rect x="170" y="0" width="14" height="15" fill="#f2f2f2"/><rect x="184" y="0" width="14" height="15" fill="#f9f9f9"/><rect x="198" y="0" width="14" height="15" fill="#ffffff"/><rect x="212" y="0" width="14" height="15" fill="#800000"/><rect x="226" y="0" width="14" height="15" fill="#ff0000"/><rect x="240" y="0" width="14" height="15" fill="#808000"/><rect x="254" y="0" width="14" height="15" fill="#ffff00"/><rect x="268" y="0" width="14" height="15" fill="#008000"/><rect x="282" y="0" width="14" height="15" fill="#00ff00"/><rect x="296" y="0" width="14" height="15" fill="#008080"/><rect x="310" y="0" width="14" height="15" fill="#00ffff"/><rect x="324" y="0" width="14" height="15" fill="#000080"/><rect x="338" y="0" width="14" height="15" fill="#0000ff"/><rect x="352" y="0" width="14" height="15" fill="#800080"/><rect x="366" y="0" width="14" height="15" fill="#ff00ff"/><rect x="380" y="0" width="14" height="15" fill="#2b0000"/><rect x="394" y="0" width="14" height="15" fill="#550000"/><rect x="408" y="0" width="14" height="15" fill="#800000"/><rect x="422" y="0" width="14" height="15" fill="#aa0000"/><rect x="436" y="0" width="14" height="15" fill="#d40000"/><rect x="450" y="0" width="14" height="15" fill="#ff0000"/><rect x="464" y="0" width="14" height="15" fill="#ff2a2a"/><rect x="478" y="0" width="14" height="15" fill="#ff5555"/><rect x="492" y="0" width="14" height="15" fill="#ff8080"/><rect x="506" y="0" width="14" height="15" fill="#ffaaaa"/><rect x="520" y="0" width="14" height="15" fill="#ffd5d5"/><rect x="534" y="0" width="14" height="15" fill="#280b0b"/><rect x="548" y="0" width="14" height="15" fill="#501616"/><rect x="562" y="0" width="14" height="15" fill="#782121"/><rect x="576" y="0" width="14" height="15" fill="#a02c2c"/><rect x="590" y="0" width="14" height="15" fill="#c83737"/><rect x="604" y="0" width="14" height="15" fill="#d35f5f"/><rect x="618" y="0" width="14" height="15" fill="#de8787"/><rect x="632" y="0" width="14" height="15" fill="#e9afaf"/><rect x="646" y="0" width="14" height="15" fill="#f4d7d7"/><rect x="660" y="0" width="14" height="15" fill="#241c1c"/><rect x="674" y="0" width="14" height="15" fill="#483737"/><rect x="688" y="0" width="14" height="15" fill="#6c5353"/><rect x="702" y="0" width="14" height="15" fill="#916f6f"/><rect x="716" y="0" width="14" height="15" fill="#ac9393"/><rect x="730" y="0" width="14" height="15" fill="#c8b7b7"/><rect x="744" y="0" width="14" height="15" fill="#e3dbdb"/><rect x="758" y="0" width="14" height="15" fill="#2b1100"/><rect x="772" y="0" width="14" height="15" fill="#552200"/><rect x="786" y="0" width="14" height="15" fill="#803300"/><rect x="800" y="0" width="14" height="15" fill="#aa4400"/><rect x="814" y="0" width="14" height="15" fill="#d45500"/><rect x="828" y="0" width="14" height="15" fill="#ff6600"/><rect x="842" y="0" width="14" height="15" fill="#ff7f2a"/><rect x="856" y="0" width="14" height="15" fill="#ff9955"/><rect x="870" y="0" width="14" height="15" fill="#ffb380"/><rect x="884" y="0" width="14" height="15" fill="#ffccaa"/><rect x="898" y="0" width="14" height="15" fill="#ffe6d5"/><rect x="912" y="0" width="14" height="15" fill="#28170b"/><rect x="926" y="0" width="14" height="15" fill="#502d16"/><rect x="940" y="0" width="14" height="15" fill="#784421"/><rect x="954" y="0" width="14" height="15" fill="#a05a2c"/><rect x="968" y="0" width="14" height="15" fill="#c87137"/><rect x="982" y="0" width="14" height="15" fill="#d38d5f"/><rect x="996" y="0" width="14" height="15" fill="#deaa87"/><rect x="1010" y="0" width="14" height="15" fill="#e9c6af"/><rect x="1024" y="0" width="14" height="15" fill="#f4e3d7"/><rect x="1038" y="0" width="14" height="15" fill="#241f1c"/><rect x="1052" y="0" width="14" height="15" fill="#483e37"/><rect x="1066" y="0" width="14" height="15" fill="#6c5d53"/><rect x="1080" y="0" width="14" height="15" fill="#917c6f"/><rect x="1094" y="0" width="14" height="15" fill="#ac9d93"/><rect x="1108" y="0" width="14" height="15" fill="#c8beb7"/><rect x="1122" y="0" width="14" height="15" fill="#e3dedb"/><rect x="1136" y="0" width="14" height="15" fill="#2b2200"/><rect x="1150" y="0" width="14" height="15" fill="#554400"/><rect x="1164" y="0" width="14" height="15" fill="#806600"/><rect x="1178" y="0" width="14" height="15" fill="#aa8800"/><rect x="1192" y="0" width="14" height="15" fill="#d4aa00"/><rect x="1206" y="0" width="14" height="15" fill="#ffcc00"/><rect x="1220" y="0" width="14" height="15" fill="#ffd42a"/><rect x="1234" y="0" width="14" height="15" fill="#ffdd55"/><rect x="1248" y="0" width="14" height="15" fill="#ffe680"/><rect x="1262" y="0" width="14" height="15" fill="#ffeeaa"/><rect x="1276" y="0" width="14" height="15" fill="#fff6d5"/><rect x="1290" y="0" width="14" height="15" fill="#28220b"/><rect x="1304" y="0" width="14" height="15" fill="#504416"/><rect x="1318" y="0" width="14" height="15" fill="#786721"/><rect x="1332" y="0" width="14" height="15" fill="#a0892c"/><rect x="1346" y="0" width="14" height="15" fill="#c8ab37"/><rect x="1360" y="0" width="14" height="15" fill="#d3bc5f"/><rect x="1374" y="0" width="14" height="15" fill="#decd87"/><rect x="1388" y="0" width="14" height="15" fill="#e9ddaf"/><rect x="1402" y="0" width="14" height="15" fill="#f4eed7"/><rect x="1416" y="0" width="14" height="15" fill="#24221c"/><rect x="1430" y="0" width="14" height="15" fill="#484537"/><rect x="1444" y="0" width="14" height="15" fill="#6c6753"/><rect x="1458" y="0" width="14" height="15" fill="#918a6f"/><rect x="1472" y="0" width="14" height="15" fill="#aca793"/><rect x="1486" y="0" width="14" height="15" fill="#c8c4b7"/><rect x="1500" y="0" width="14" height="15" fill="#e3e2db"/><rect x="1514" y="0" width="14" height="15" fill="#222b00"/><rect x="1528" y="0" width="14" height="15" fill="#445500"/><rect x="1542" y="0" width="14" height="15" fill="#668000"/><rect x="1556" y="0" width="14" height="15" fill="#88aa00"/><rect x="1570" y="0" width="14" height="15" fill="#aad400"/><rect x="1584" y="0" width="14" height="15" fill="#ccff00"/><rect x="1598" y="0" width="14" height="15" fill="#d4ff2a"/><rect x="1612" y="0" width="14" height="15" fill="#ddff55"/><rect x="1626" y="0" width="14" height="15" fill="#e5ff80"/><rect x="1640" y="0" width="14" height="15" fill="#eeffaa"/><rect x="1654" y="0" width="14" height="15" fill="#f6ffd5"/><rect x="1668" y="0" width="14" height="15" fill="#22280b"/><rect x="1682" y="0" width="14" height="15" fill="#445016"/><rect x="1696" y="0" width="14" height="15" fill="#677821"/><rect x="1710" y="0" width="14" height="15" fill="#89a02c"/><rect x="1724" y="0" width="14" height="15" fill="#abc837"/><rect x="1738" y="0" width="14" height="15" fill="#bcd35f"/><rect x="1752" y="0" width="14" height="15" fill="#cdde87"/><rect x="1766" y="0" width="14" height="15" fill="#dde9af"/><rect x="1780" y="0" width="14" height="15" fill="#eef4d7"/><rect x="1794" y="0" width="14" height="15" fill="#22241c"/><rect x="1808" y="0" width="14" height="15" fill="#454837"/><rect x="1822" y="0" width="14" height="15" fill="#676c53"/><rect x="1836" y="0" width="14" height="15" fill="#8a916f"/><rect x="1850" y="0" width="14" height="15" fill="#a7ac93"/><rect x="1864" y="0" width="14" height="15" fill="#c4c8b7"/><rect x="1878" y="0" width="14" height="15" fill="#e2e3db"/><rect x="1892" y="0" width="14" height="15" fill="#112b00"/><rect x="1" y="0" width="15" height="15" fill="#fff"/></svg><svg style="left:0;top:962px" width="17" height="17" viewBox="0 0 17 17"><path d="M1.5 1V16" stroke="#000" stroke-width="1"/><path d="M2 1.5L15 14.5M15 1.5L2 14.5" stroke="#8a1a1a" stroke-width="1.2"/><path d="M1 16.5H16" stroke="#000"/></svg><svg style="left:1909px;top:963px" width="7" height="11" viewBox="0 0 7 11"><path d="M7 0V11L0 5.5Z" fill="#000"/></svg><div class="a" style="left:0;top:979px;width:1920px;height:16px;background:#f0f0f0"></div><div class="a" style="left:21px;top:981px;width:589px;height:14px;background:#cdcdcd"></div><svg style="left:5px;top:983px" width="8" height="11" viewBox="0 0 8 11"><path d="M7 1L2 5.5L7 10" fill="none" stroke="#b0b0b0" stroke-width="1.5"/></svg><svg style="left:1900px;top:983px" width="8" height="11" viewBox="0 0 8 11"><path d="M1 1L6 5.5L1 10" fill="none" stroke="#555" stroke-width="1.5"/></svg><div class="a" style="left:0;top:995px;width:1920px;height:35px;background:#f0f0f0"></div><div class="t" style="left:2px;top:1000px;font-size:12.5px">Заливка:</div><div class="t" style="left:2px;top:1016px;font-size:12.5px">Обводка:</div><div class="t" style="left:80px;top:1000px;font-size:12.5px">Н/Д</div><div class="t" style="left:80px;top:1016px;font-size:12.5px">Н/Д</div><div class="t" style="left:126px;top:1006px;font-size:13px">H:</div><div class="a" style="left:140px;top:1000px;width:37px;height:24px;background:#f0f0f0;border:1px solid #cfcfcf"></div><div class="t" style="left:144px;top:1006px;font-size:13px;color:#9a9a9a">0</div><div class="a" style="left:177px;top:1001px;width:10px;height:22px;background:#ececec;border:1px solid #dadada"></div><svg style="left:178px;top:1005px" width="8" height="14" viewBox="0 0 8 14"><path d="M0 4L4 0L8 4Z M0 10L4 14L8 10Z" fill="#9a9a9a"/></svg><div class="a" style="left:190px;top:996px;width:1px;height:33px;background:#c8c8c8"></div><svg style="left:197px;top:1008px" width="11" height="8" viewBox="0 0 11 8"><path d="M1 4C3 1 8 1 10 4C8 7 3 7 1 4Z" fill="#fff" stroke="#222"/><circle cx="5.5" cy="4" r="2" fill="#222"/><path d="M2 1l1 1M5.5 0v1M9 1l-1 1" stroke="#222"/></svg><svg style="left:217px;top:1007px" width="9" height="10" viewBox="0 0 9 10"><path d="M2 4.5V3a2.5 2.5 0 0 1 5 -1" fill="none" stroke="#555" stroke-width="1"/><rect x=".5" y="4.5" width="8" height="5" fill="#f0e070" stroke="#555" stroke-width=".8"/></svg><div class="a" style="left:231px;top:997px;width:97px;height:33px;background:#fff;border:1px solid #c8c8c8"></div><div class="a" style="left:306px;top:998px;width:22px;height:31px;background:#dadada;border:1px solid #adadad"></div><svg style="left:311px;top:1009px" width="12" height="8" viewBox="0 0 12 8"><path d="M1 1.5L6 6.5L11 1.5" fill="none" stroke="#505050" stroke-width="1.2"/></svg><div class="t" style="left:236px;top:1006px;font-size:13px;font-weight:bold"><span style="font-size:10px;position:relative;top:-1px">•</span> Layer 1</div><div class="t" style="left:331px;top:1006px;font-size:14.7px;color:#222">Вводите текст; <b style="color:#000">Enter</b> начинает новый абзац.</div><div class="a" style="left:1770px;top:995px;width:1px;height:35px;background:#c8c8c8"></div><div class="t" style="left:1771px;top:999px;font-size:12px">X:</div><div class="t" style="left:1771px;top:1016px;font-size:12px">Y:</div><div class="t" style="left:1785px;top:998px;font-size:12px;font-family:'Liberation Mono',monospace;letter-spacing:.3px">-164,80</div><div class="t" style="left:1785px;top:1015px;font-size:12px;font-family:'Liberation Mono',monospace">&nbsp;&nbsp;99,03</div><div class="t" style="left:1851px;top:1006px;font-size:13px">Z:</div><div class="a" style="left:1866px;top:999px;width:44px;height:26px;background:#fff;border:1px solid #c8c8c8"></div><div class="t" style="left:1875px;top:1006px;font-size:13px">70%</div><div class="a" style="left:1910px;top:1000px;width:9px;height:24px;background:#e8e8e8;border:1px solid #c8c8c8"></div><svg style="left:1911px;top:1004px" width="7" height="16" viewBox="0 0 7 16"><path d="M0 4L3.5 0L7 4Z M0 12L3.5 16L7 12Z" fill="#000"/></svg><div class="a" style="left:0;top:1029px;width:1920px;height:1px;background:#fff"></div><div class="a" style="left:0;top:1030px;width:1920px;height:50px;background:#1e1e1e"></div><div class="a" style="left:0;top:1030px;width:1920px;height:1px;background:#0f0f0f"></div><div class="a" style="left:372px;top:1030px;width:61px;height:50px;background:#484848"></div><div class="a" style="left:129px;top:1077px;width:51px;height:3px;background:#f0a0a8"></div><div class="a" style="left:169px;top:1077px;width:11px;height:3px;background:#a07078"></div><div class="a" style="left:191px;top:1077px;width:51px;height:3px;background:#f0a0a8"></div><div class="a" style="left:253px;top:1077px;width:51px;height:3px;background:#f0a0a8"></div><div class="a" style="left:289px;top:1077px;width:15px;height:3px;background:#a07078"></div><div class="a" style="left:315px;top:1077px;width:51px;height:3px;background:#f0a0a8"></div><div class="a" style="left:372px;top:1077px;width:61px;height:3px;background:#f0a0a8"></div><svg style="left:20px;top:1044px" width="21" height="21" viewBox="0 0 21 21"><path d="M0 3L9 1.6V10H0Z M10 1.4L21 0V10H10Z M0 11H9V19.4L0 18Z M10 11H21V21L10 19.6Z" fill="#fff"/></svg><svg style="left:80px;top:1045px" width="21" height="21" viewBox="0 0 21 21"><circle cx="12.5" cy="8.5" r="6.5" fill="none" stroke="#fff" stroke-width="1.5"/><path d="M8 13L1 20" stroke="#fff" stroke-width="1.5"/></svg><svg style="left:140px;top:1042px" width="28" height="24" viewBox="0 0 28 24"><path d="M0 2H10L12 4H28V22H0Z" fill="#f2c14e"/><path d="M0 6H28V23H0Z" fill="#ffd869"/><path d="M7 12H21V23H18V15H10V23H7Z" fill="#3a8fd8"/></svg><svg style="left:202px;top:1041px" width="28" height="28" viewBox="0 0 28 28"><path d="M14 14L1.88 7A14 14 0 0 1 26.12 7Z" fill="#db4437"/><path d="M14 14L26.12 7A14 14 0 0 1 14 28Z" fill="#ffcd40"/><path d="M14 14L14 28A14 14 0 0 1 1.88 7Z" fill="#0f9d58"/><circle cx="14" cy="14" r="6.3" fill="#fff"/><circle cx="14" cy="14" r="5" fill="#4285f4"/></svg><svg style="left:265px;top:1042px" width="27" height="24" viewBox="0 0 27 24"><rect x="1" y="1" width="25" height="7" fill="#b04ab8"/><rect x="1" y="8" width="25" height="7" fill="#2a3ad0"/><rect x="1" y="15" width="25" height="7" fill="#30b040"/><rect x="11" y="0" width="5" height="23" fill="#c8a060"/><path d="M1 1V22" stroke="#777" stroke-width="2"/></svg><div class="a" style="left:329px;top:1044px;width:22px;height:22px;background:linear-gradient(135deg,#9a9a9a,#555);border-radius:2px"></div><svg style="left:386px;top:1038px" width="31" height="31" viewBox="0.5 0.5 24 24"><defs><linearGradient id="lg2" x1="0" y1="0" x2="1" y2="1"><stop offset="0" stop-color="#ffffff"/><stop offset=".5" stop-color="#c8ccd8"/><stop offset="1" stop-color="#3a5a90"/></linearGradient></defs><path d="M12 2.8L21.8 12.6L16 15.8L15.5 19.5L12.5 22.8L9 20L8 15.5L2.2 12.6Z" fill="#050505"/><path d="M12 4.2L19.8 12.2C17.5 12.8 15 12.5 13.5 11L12.3 12.3L10.5 10.2L9 12.8L4.2 12.3Z" fill="url(#lg2)"/><path d="M7.5 14.2C9 13.5 12 13.6 14 14.6" stroke="#777" stroke-width="1" fill="none"/><circle cx="18.5" cy="18" r="1" fill="#111"/><circle cx="7" cy="19" r=".8" fill="#111"/></svg><svg style="left:1637px;top:1048px" width="17" height="10" viewBox="0 0 17 10"><path d="M1 9L8.5 1.5L16 9" fill="none" stroke="#fff" stroke-width="1.3"/></svg><svg style="left:1668px;top:1045px" width="20" height="17" viewBox="0 0 20 17"><path d="M1 6H4L9 1V16L4 11H1Z" fill="none" stroke="#fff" stroke-width="1.1"/><path d="M12 5.5C13.5 7 13.5 10 12 11.5M14.5 3.5C17 6 17 11 14.5 13.5M17 1.5C20.5 5 20.5 12 17 15.5" fill="none" stroke="#ccc" stroke-width="1"/></svg><svg style="left:1701px;top:1044px" width="14" height="20" viewBox="0 0 14 20"><rect x="3" y="1" width="8" height="2" fill="#ccc"/><rect x="1.5" y="3" width="11" height="16" rx="1.5" fill="#1a7a7a" stroke="#ddd" stroke-width="1.5"/></svg><div class="t" style="left:1732px;top:1047px;font-size:14px;color:#fff">РУС</div><div class="t" style="left:1797px;top:1036px;font-size:14.5px;color:#fff">7:58</div><div class="t" style="left:1776px;top:1059px;font-size:14.2px;color:#fff">24.02.2020</div><svg style="left:1870px;top:1044px" width="21" height="20" viewBox="0 0 21 20"><path d="M.5 .5H20.5V15.5H10L6 19V15.5H.5Z" fill="none" stroke="#fff" stroke-width="1.1"/></svg><div class="a" style="left:1917px;top:1030px;width:1px;height:50px;background:#555"></div></body></html>
